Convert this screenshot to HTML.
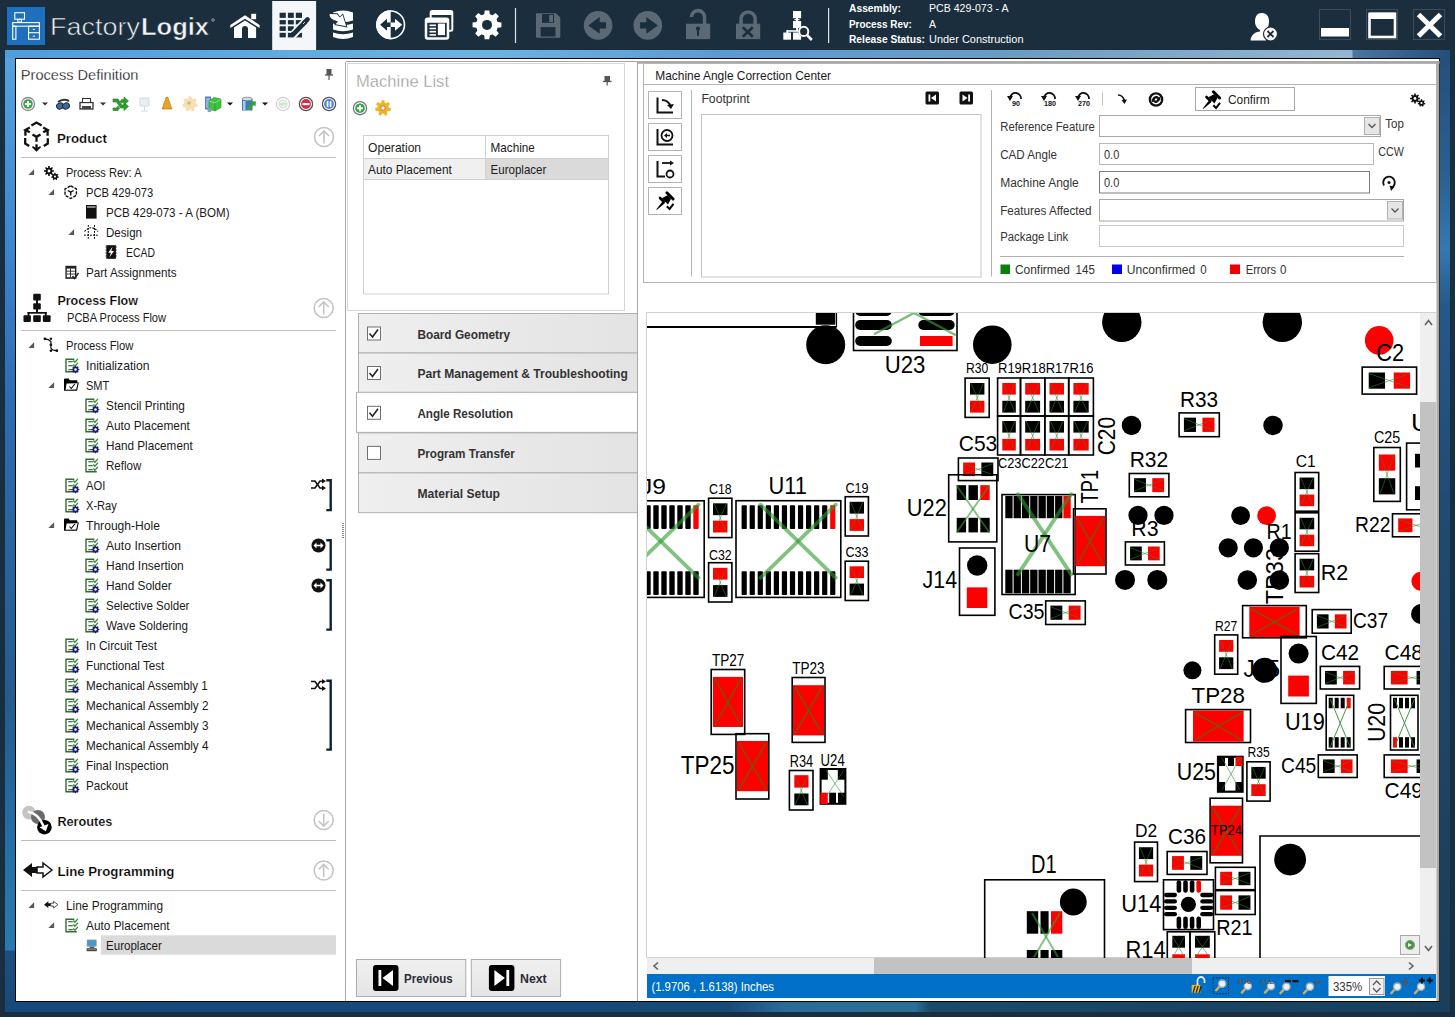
<!DOCTYPE html>
<html><head><meta charset="utf-8"><title>FactoryLogix</title>
<style>html,body{margin:0;padding:0;width:1455px;height:1017px;overflow:hidden;background:#1b2e3d}
svg{display:block;font-family:"Liberation Sans",sans-serif}</style></head>
<body><svg width="1455" height="1017" viewBox="0 0 1455 1017">
<defs>
<linearGradient id="gTop" x1="0" x2="1" y1="0" y2="0">
 <stop offset="0" stop-color="#4f9ddd"/><stop offset="0.33" stop-color="#6cb4e0"/>
 <stop offset="0.5" stop-color="#5b9bd4"/><stop offset="0.7" stop-color="#6b9cc2"/>
 <stop offset="0.932" stop-color="#93b7d2"/><stop offset="0.933" stop-color="#4a77a0"/>
 <stop offset="1" stop-color="#234e7b"/></linearGradient>
<linearGradient id="gLeft" x1="0" x2="0" y1="0" y2="1">
 <stop offset="0" stop-color="#56a2e0"/><stop offset="0.2" stop-color="#3c86cc"/>
 <stop offset="0.358" stop-color="#2c6cb2"/><stop offset="0.673" stop-color="#235c8e"/>
 <stop offset="0.83" stop-color="#2370a8"/><stop offset="0.935" stop-color="#2a7ab2"/><stop offset="0.936" stop-color="#1a4f80"/>
 <stop offset="1" stop-color="#174a7a"/></linearGradient>
<linearGradient id="gRight" x1="0" x2="0" y1="0" y2="1">
 <stop offset="0" stop-color="#24507d"/><stop offset="0.12" stop-color="#2a5f90"/><stop offset="0.2" stop-color="#3579b0"/>
 <stop offset="0.26" stop-color="#25588a"/><stop offset="0.5" stop-color="#1f4a70"/><stop offset="1" stop-color="#1a3d58"/></linearGradient>
<linearGradient id="gBot" x1="0" x2="1" y1="0" y2="0">
 <stop offset="0" stop-color="#174a7a"/><stop offset="0.5" stop-color="#184a78"/>
 <stop offset="0.54" stop-color="#2a6c97"/><stop offset="0.63" stop-color="#2a6f96"/><stop offset="0.64" stop-color="#1a4a6a"/>
 <stop offset="1" stop-color="#17405e"/></linearGradient>
<linearGradient id="gAcc" x1="0" x2="1" y1="0" y2="0">
 <stop offset="0" stop-color="#efefef"/><stop offset="1" stop-color="#e3e3e3"/></linearGradient>
<linearGradient id="gBtn" x1="0" x2="0" y1="0" y2="1">
 <stop offset="0" stop-color="#f0f0f0"/><stop offset="1" stop-color="#e5e5e5"/></linearGradient>
</defs>
<rect x="0" y="0" width="1455" height="1017" fill="#1b2e3d"/>
<rect x="5" y="50" width="1445" height="8" fill="url(#gTop)"/>
<rect x="5" y="58" width="10" height="954" fill="url(#gLeft)"/>
<rect x="1440" y="58" width="10" height="954" fill="url(#gRight)"/>
<rect x="5" y="1002" width="1445" height="10" fill="url(#gBot)"/>
<rect x="15" y="58" width="1425" height="944" fill="#000"/>
<rect x="16" y="59" width="1423" height="942" fill="#fff"/>
<rect x="7" y="7" width="38" height="38" fill="#1f6fbf"/>
<rect x="14.8" y="12.7" width="9.7" height="6.5" fill="none" stroke="#ffffff" stroke-width="1.1"/>
<rect x="17.9" y="19.4" width="3.6" height="2.6" fill="none" stroke="#ffffff" stroke-width="1"/>
<rect x="12.7" y="22.6" width="26.7" height="3.6" fill="none" stroke="#ffffff" stroke-width="1.1"/>
<rect x="12.7" y="26.2" width="3.2" height="13" fill="none" stroke="#ffffff" stroke-width="1.1"/>
<rect x="28.6" y="26.2" width="10.8" height="13" fill="none" stroke="#ffffff" stroke-width="1.1"/>
<line x1="28.6" y1="32.7" x2="39.4" y2="32.7" stroke="#ffffff" stroke-width="1.1"/>
<line x1="32.8" y1="29.4" x2="35" y2="29.4" stroke="#ffffff" stroke-width="1"/>
<line x1="32.8" y1="36.2" x2="35" y2="36.2" stroke="#ffffff" stroke-width="1"/>
<text x="50" y="35" font-size="23.5" fill="#f2f4f6" textLength="90" lengthAdjust="spacingAndGlyphs" stroke="#1b2e3d" stroke-width="0.6" paint-order="fill">Factory</text>
<text x="141" y="35" font-size="23.5" font-weight="bold" fill="#f2f4f6" textLength="68" lengthAdjust="spacingAndGlyphs" stroke="#1b2e3d" stroke-width="0.5" paint-order="fill">Logix</text>
<circle cx="213" cy="20" r="1.3" fill="none" stroke="#cfd6dc" stroke-width="0.6"/>
<path d="M230.3,25 L245,15.2 L259.6,25 L259.6,28 L245,18.8 L230.3,28 Z" fill="#ffffff"/>
<rect x="251.2" y="13.8" width="4.9" height="5.4" fill="#ffffff"/>
<path d="M234,27.5 L245,20.5 L256.1,27.5 L256.1,37.9 L248,37.9 L248,29 A3,3 0 0 0 242,29 L242,37.9 L234,37.9 Z" fill="#ffffff"/>
<rect x="272.2" y="1" width="43.9" height="49" fill="#f5f6fa"/>
<rect x="279.6" y="12.7" width="6.199999999999989" height="5.199999999999999" fill="#1b2e3d"/>
<rect x="287.9" y="12.7" width="5.900000000000034" height="5.199999999999999" fill="#1b2e3d"/>
<rect x="295.8" y="12.7" width="6.199999999999989" height="5.199999999999999" fill="#1b2e3d"/>
<rect x="279.6" y="20.1" width="6.199999999999989" height="4.299999999999997" fill="#1b2e3d"/>
<rect x="287.9" y="20.1" width="5.900000000000034" height="4.299999999999997" fill="#1b2e3d"/>
<rect x="295.8" y="20.1" width="6.199999999999989" height="4.299999999999997" fill="#1b2e3d"/>
<rect x="279.6" y="26.3" width="6.199999999999989" height="4.599999999999998" fill="#1b2e3d"/>
<rect x="287.9" y="26.3" width="5.900000000000034" height="4.599999999999998" fill="#1b2e3d"/>
<rect x="295.8" y="26.3" width="6.199999999999989" height="4.599999999999998" fill="#1b2e3d"/>
<rect x="279.6" y="32.8" width="6.199999999999989" height="4.600000000000001" fill="#1b2e3d"/>
<rect x="287.9" y="32.8" width="5.900000000000034" height="4.600000000000001" fill="#1b2e3d"/>
<rect x="295.8" y="32.8" width="6.199999999999989" height="4.600000000000001" fill="#1b2e3d"/>
<line x1="293" y1="35" x2="306" y2="21" stroke="#f5f6fa" stroke-width="8"/>
<line x1="292.5" y1="35.2" x2="305.8" y2="21.3" stroke="#1b2e3d" stroke-width="4.6"/>
<path d="M290.3,36.5 L291.5,31.8 L295.3,35.3 Z" fill="#1b2e3d"/>
<line x1="304" y1="23" x2="307.5" y2="19.4" stroke="#1b2e3d" stroke-width="4.6" stroke-linecap="round"/>
<line x1="303" y1="24" x2="305" y2="22" stroke="#f5f6fa" stroke-width="0.8"/>
<g fill="#fff">
<path d="M333,12.5 Q343,8.5 353,12.5 L353,20.5 Q343,24 333,20.5 Z" fill="#ffffff"/>
<path d="M333,23.5 Q343,27 353,23.5 L353,29.5 Q343,33 333,29.5 Z" fill="#ffffff"/>
<path d="M333,32.5 Q343,36 353,32.5 L353,37 Q343,41 333,37 Z" fill="#ffffff"/>
</g>
<path d="M328.5,13 L337.5,13.2 L340,16.5 L343,13.5 L347.5,27.5 L334,25 L337,22 L332,20 Z" fill="#1b2e3d"/>
<path d="M329.5,14 L337,14.2 L339.8,17.6 L342.6,15 L346.2,26.3 L335.5,24.2 L338,21.6 L333,19.5 Q330,18.5 329.5,14 Z" fill="#fff"/>
<circle cx="390.7" cy="24.8" r="13.8" fill="none" stroke="#fff" stroke-width="1.6"/>
<path d="M390.7,10.3 A14.5,14.5 0 0 0 390.7,39.3 Z" fill="#fff"/>
<path d="M380.1,24.8 L387,18.8 L387,22.6 L390.7,22.6 L390.7,27 L387,27 L387,30.8 Z" fill="#1b2e3d"/>
<path d="M402.2,24.8 L395,18.8 L395,22.6 L390.7,22.6 L390.7,27 L395,27 L395,30.8 Z" fill="#fff"/>
<rect x="430.7" y="11.1" width="21.6" height="19.7" fill="none" stroke="#ffffff" stroke-width="2" rx="1.5"/>
<rect x="431" y="11" width="21" height="4" fill="#ffffff"/>
<rect x="426" y="18.8" width="22" height="19.7" fill="#1b2e3d" stroke="#ffffff" stroke-width="2.5" rx="1.5"/>
<rect x="426" y="18.8" width="22" height="4" fill="#ffffff"/>
<rect x="429.5" y="24.5" width="6.5" height="1.6" fill="#ffffff"/>
<rect x="429.5" y="27.7" width="6.5" height="1.6" fill="#ffffff"/>
<rect x="429.5" y="30.9" width="6.5" height="1.6" fill="#ffffff"/>
<rect x="429.5" y="34.1" width="6.5" height="1.6" fill="#ffffff"/>
<rect x="437.9" y="23.6" width="7.1" height="11.5" fill="#ffffff"/>
<path d="M484.20,14.47 L484.71,10.48 L489.29,10.48 L489.80,14.47 L492.39,15.54 L495.58,13.08 L498.82,16.32 L496.36,19.51 L497.43,22.10 L501.42,22.61 L501.42,27.19 L497.43,27.70 L496.36,30.29 L498.82,33.48 L495.58,36.72 L492.39,34.26 L489.80,35.33 L489.29,39.32 L484.71,39.32 L484.20,35.33 L481.61,34.26 L478.42,36.72 L475.18,33.48 L477.64,30.29 L476.57,27.70 L472.58,27.19 L472.58,22.61 L476.57,22.10 L477.64,19.51 L475.18,16.32 L478.42,13.08 L481.61,15.54 Z" fill="#ffffff"/>
<circle cx="487" cy="24.9" r="10.8" fill="#ffffff"/>
<circle cx="487" cy="24.9" r="5" fill="#1b2e3d"/>
<line x1="515.5" y1="8" x2="515.5" y2="43" stroke="#e0e4e8" stroke-width="1.2"/>
<path d="M536,14.2 Q536,13.2 537,13.2 L556,13.2 L560.3,17.5 L560.3,36.7 Q560.3,37.7 559.3,37.7 L537,37.7 Q536,37.7 536,36.7 Z" fill="#5b6975"/>
<rect x="542" y="14.1" width="12" height="8.7" fill="#1b2e3d"/>
<rect x="549.2" y="15" width="3.8" height="7" fill="#5b6975"/>
<rect x="540.6" y="27.1" width="14.9" height="9.4" fill="#1b2e3d"/>
<circle cx="598.1" cy="25.4" r="14.3" fill="#5b6975"/>
<path d="M588.2,25.4 L599.7,17 L599.7,22.3 L606,22.3 L606,28.6 L599.7,28.6 L599.7,33.8 Z" fill="#1b2e3d"/>
<circle cx="647.8" cy="25.4" r="14.3" fill="#5b6975"/>
<path d="M657.9,25.4 L646.3,17 L646.3,22.3 L640.1,22.3 L640.1,28.6 L646.3,28.6 L646.3,33.8 Z" fill="#1b2e3d"/>
<rect x="686" y="23.7" width="24.2" height="15.4" fill="#5b6975"/>
<path d="M689.8,17 L689.8,16 A8.2,8.2 0 0 1 706.3,18 L706.3,24 L702.8,24 L702.8,18 A4.7,4.7 0 0 0 693.3,16.5 L693.3,17 Z" fill="#5b6975"/>
<circle cx="698" cy="28.7" r="2.1" fill="#1b2e3d"/>
<rect x="697" y="29" width="2" height="6.8" fill="#1b2e3d"/>
<rect x="736" y="23.7" width="24.2" height="15.4" fill="#5b6975"/>
<path d="M739.3,24 L739.3,19 A8.8,8.8 0 0 1 756.9,19 L756.9,24 L753.4,24 L753.4,19 A5.3,5.3 0 0 0 742.8,19 L742.8,24 Z" fill="#5b6975"/>
<line x1="742.8" y1="27.2" x2="752.8" y2="36.8" stroke="#1b2e3d" stroke-width="2.6"/>
<line x1="752.8" y1="27.2" x2="742.8" y2="36.8" stroke="#1b2e3d" stroke-width="2.6"/>
<rect x="793" y="11" width="8.1" height="7.2" fill="#ffffff"/>
<rect x="793" y="21" width="8.1" height="7.1" fill="#ffffff"/>
<rect x="796" y="18" width="2" height="3" fill="#ffffff"/>
<rect x="794.5" y="19" width="5" height="1.2" fill="#ffffff"/>
<rect x="796" y="28" width="2" height="3" fill="#ffffff"/>
<rect x="786.5" y="30.2" width="12" height="1.6" fill="#ffffff"/>
<rect x="786.5" y="30.2" width="1.6" height="3" fill="#ffffff"/>
<rect x="783.3" y="32.5" width="7.7" height="7.2" fill="#ffffff"/>
<rect x="793" y="32.5" width="8.1" height="7.2" fill="#ffffff"/>
<circle cx="803.7" cy="31.4" r="5.6" fill="#1b2e3d"/>
<circle cx="803.7" cy="31.4" r="4.6" fill="none" stroke="#fff" stroke-width="2"/>
<line x1="807" y1="35" x2="811.8" y2="40" stroke="#ffffff" stroke-width="2.6"/>
<line x1="828.6" y1="8" x2="828.6" y2="43" stroke="#e0e4e8" stroke-width="1.2"/>
<text x="849" y="12" font-size="11.3" font-weight="bold" fill="#ffffff" textLength="52" lengthAdjust="spacingAndGlyphs">Assembly:</text>
<text x="849" y="28" font-size="11.3" font-weight="bold" fill="#ffffff" textLength="62.8" lengthAdjust="spacingAndGlyphs">Process Rev:</text>
<text x="849" y="43" font-size="11.3" font-weight="bold" fill="#ffffff" textLength="76" lengthAdjust="spacingAndGlyphs">Release Status:</text>
<text x="929" y="12" font-size="11.3" fill="#ffffff" textLength="79.5" lengthAdjust="spacingAndGlyphs">PCB 429-073 - A</text>
<text x="929" y="28" font-size="11.3" fill="#ffffff" textLength="7" lengthAdjust="spacingAndGlyphs">A</text>
<text x="929" y="43" font-size="11.3" fill="#ffffff" textLength="94.5" lengthAdjust="spacingAndGlyphs">Under Construction</text>
<path d="M1262,13 C1256,13 1255,18 1255,22 C1255,26 1258,29 1260,30 L1260,31.5 C1255,32 1251,35 1250.5,40.5 L1266,40.5 L1266,30 C1268,28 1269,25 1269,21 C1269,17 1267,13 1262,13 Z" fill="#ffffff"/>
<circle cx="1270.5" cy="34" r="7" fill="#ffffff" stroke="#1b2e3d" stroke-width="1.2"/>
<line x1="1267.5" y1="31" x2="1273.5" y2="37" stroke="#1b2e3d" stroke-width="1.8"/>
<line x1="1273.5" y1="31" x2="1267.5" y2="37" stroke="#1b2e3d" stroke-width="1.8"/>
<rect x="1319.5" y="9.5" width="31" height="30" fill="none" stroke="#3d4c57" stroke-width="1"/>
<rect x="1366.5" y="9.5" width="31" height="30" fill="none" stroke="#3d4c57" stroke-width="1"/>
<rect x="1413.5" y="9.5" width="31" height="30" fill="none" stroke="#3d4c57" stroke-width="1"/>
<rect x="1321" y="28" width="28" height="8.5" fill="#ffffff"/>
<rect x="1369.5" y="14" width="25.5" height="23" fill="none" stroke="#ffffff" stroke-width="2.6"/>
<rect x="1369" y="12.5" width="27" height="6.5" fill="#ffffff"/>
<line x1="1418.5" y1="14.5" x2="1440.5" y2="36" stroke="#ffffff" stroke-width="5"/>
<line x1="1440.5" y1="14.5" x2="1418.5" y2="36" stroke="#ffffff" stroke-width="5"/>
<text x="20.8" y="80" font-size="15.3" fill="#000" textLength="117.6" lengthAdjust="spacingAndGlyphs" stroke="#fff" stroke-width="0.3" paint-order="fill">Process Definition</text>
<rect x="326.5" y="69" width="5" height="6" fill="#555"/>
<line x1="325" y1="75" x2="333" y2="75" stroke="#555" stroke-width="1.3"/>
<line x1="329" y1="75" x2="329" y2="80" stroke="#555" stroke-width="1.2"/>
<circle cx="28" cy="104" r="6.5" fill="#fff" stroke="#888" stroke-width="1.3"/>
<circle cx="28" cy="104" r="4.8" fill="#3aa64a"/>
<rect x="25" y="103" width="6" height="2" fill="#fff"/>
<rect x="27" y="101" width="2" height="6" fill="#fff"/>
<path d="M42,102.5 L48,102.5 L45,105.5 Z" fill="#333"/>
<g fill="#3b6ea0" stroke="#222" stroke-width="1">
<ellipse cx="60" cy="106" rx="3.5" ry="3" transform="rotate(-30 60 106)"/>
<ellipse cx="66" cy="106" rx="3.5" ry="3" transform="rotate(-30 66 106)"/>
</g>
<path d="M58,102 Q63,98 69,101" fill="none" stroke="#333" stroke-width="2"/>
<rect x="80" y="102.5" width="13" height="6.5" fill="#fff" stroke="#333" stroke-width="1.3"/>
<rect x="82.5" y="98.5" width="8" height="4" fill="#fff" stroke="#333" stroke-width="1"/>
<rect x="82" y="106" width="9" height="3" fill="#444"/>
<path d="M100,102.5 L106,102.5 L103,105.5 Z" fill="#333"/>
<path d="M113,99 L118,99 L122,105 L124,105 L124,102.5 L128.5,106.5 L124,110.5 L124,108 L120.5,108 L116.5,102 L113,102 Z" fill="#2aa02a" stroke="#207a20" stroke-width="0.6"/>
<path d="M113,108 L116.5,108 L118,106 L119.5,108.5 L118,110.5 L113,110.5 Z M120,102 L121.5,99.5 L124,99.5 L124,97 L128.5,101 L124,105 L124,102.5 L122,102.5 Z" fill="#2aa02a" stroke="#207a20" stroke-width="0.6"/>
<rect x="140" y="98" width="9" height="8" fill="#e8eef4" stroke="#c9d4de" stroke-width="0.8"/>
<line x1="144.5" y1="106" x2="144.5" y2="111" stroke="#c9d4de" stroke-width="0.8"/>
<line x1="141" y1="111" x2="148" y2="111" stroke="#c9d4de" stroke-width="0.8"/>
<path d="M167,97 C165.5,97 165.5,99 165.5,100 C163.5,102 164,106 162,109 L172,109 C170,106 170.5,102 168.5,100 C168.5,99 168.5,97 167,97 Z" fill="#f0a020" stroke="#a86a10" stroke-width="0.6"/>
<path d="M188.29,98.46 L188.60,96.33 L191.40,96.33 L191.71,98.46 L193.26,99.21 L195.13,98.12 L196.87,100.31 L195.40,101.89 L195.78,103.56 L197.79,104.35 L197.17,107.07 L195.02,106.90 L193.95,108.25 L194.59,110.31 L192.07,111.52 L190.86,109.74 L189.14,109.74 L187.93,111.52 L185.41,110.31 L186.05,108.25 L184.98,106.90 L182.83,107.07 L182.21,104.35 L184.22,103.56 L184.60,101.89 L183.13,100.31 L184.87,98.12 L186.74,99.21 Z" fill="#f7e0b0"/>
<circle cx="190" cy="104" r="5.8" fill="#f7e0b0"/>
<circle cx="190" cy="104" r="2.2" fill="#f7e0b0"/>
<circle cx="189" cy="103" r="1.8" fill="#c8b8a0"/>
<rect x="205" y="96.5" width="6" height="13" fill="#5a7fc0"/>
<rect x="206" y="98" width="4" height="10" fill="#8fb0e0"/>
<path d="M209,101 L214,97.5 L221,99 L221,107.5 L215,111 L209,109 Z" fill="#3cc43c" stroke="#2a8a2a" stroke-width="0.6"/>
<path d="M209,101 L215,103 L221,99" fill="none" stroke="#9fe89f" stroke-width="0.8"/>
<line x1="215" y1="103" x2="215" y2="111" stroke="#2a8a2a" stroke-width="0.6"/>
<circle cx="209.5" cy="110" r="2.2" fill="#8aa0b8"/>
<path d="M227,102.5 L233,102.5 L230,105.5 Z" fill="#111"/>
<rect x="242" y="99" width="10.5" height="11.5" fill="#3d78b8"/>
<ellipse cx="247.25" cy="99" rx="5.25" ry="1.8" fill="#cfd8e0" stroke="#666" stroke-width="0.6"/>
<rect x="243" y="101" width="2.5" height="9" fill="#a8c8ec"/>
<path d="M247,108 L252,103 L251,101 L256,101.5 L255.5,106.5 L254,105 L249,110 Z" fill="#2faa2f"/>
<path d="M262,102.5 L268,102.5 L265,105.5 Z" fill="#111"/>
<circle cx="283" cy="104" r="6.6" fill="#fff" stroke="#d0d0d0" stroke-width="1.2"/>
<circle cx="283" cy="104" r="4.6" fill="#cfe8cf"/>
<path d="M280.5,103 A3,3 0 0 1 285.5,102.5 M285.5,105 A3,3 0 0 1 280.5,105.5" fill="none" stroke="#fff" stroke-width="1.1"/>
<circle cx="306" cy="104" r="6.6" fill="#fff" stroke="#555" stroke-width="1.3"/>
<circle cx="306" cy="104" r="4.9" fill="#d82a40"/>
<rect x="302.5" y="103" width="7" height="2.2" fill="#fff"/>
<circle cx="329" cy="104" r="6.6" fill="#fff" stroke="#555" stroke-width="1.3"/>
<circle cx="329" cy="104" r="4.9" fill="#4f86db"/>
<rect x="326.7" y="101.2" width="1.7" height="5.6" fill="#fff"/>
<rect x="329.7" y="101.2" width="1.7" height="5.6" fill="#fff"/>
<g transform="translate(18,116)" fill="none" stroke="#111" stroke-width="2.3" stroke-linejoin="miter">
<path d="M13.4,9.4 L18.5,6.6 L23.6,9.4" fill="none" stroke="#111" stroke-width="2.3"/>
<path d="M11.8,11.5 L7.4,13.9 L11.8,16.3 M7.4,13.9 L7.4,19.8" fill="none" stroke="#111" stroke-width="2.3"/>
<path d="M25.2,11.5 L29.6,13.9 L25.2,16.3 M29.6,13.9 L29.6,19.8" fill="none" stroke="#111" stroke-width="2.3"/>
<path d="M14.5,18.5 L18.5,20.8 L22.5,18.5 M18.5,20.8 L18.5,25.8" fill="none" stroke="#111" stroke-width="2.3"/>
<path d="M7.2,22 L7.2,27.6 L11.2,30" fill="none" stroke="#111" stroke-width="2.3"/>
<path d="M29.8,22.3 L29.8,27.6 L25.8,30" fill="none" stroke="#111" stroke-width="2.3"/>
<path d="M18.5,28.3 L18.5,33" fill="none" stroke="#111" stroke-width="2.3"/>
<path d="M14.5,30.8 L18.5,34.8 L22.5,30.8 L18.5,33 Z" fill="#111" stroke="#111" stroke-width="1.5"/>
</g>
<text x="57" y="142.7" font-size="13.2" font-weight="bold" fill="#000" textLength="50" lengthAdjust="spacingAndGlyphs" stroke="#fff" stroke-width="0.2" paint-order="fill">Product</text>
<circle cx="324" cy="137" r="9.5" fill="none" stroke="#c4c4c4" stroke-width="1.6"/>
<path d="M319,136 L324,131 L329,136" fill="none" stroke="#c4c4c4" stroke-width="1.6"/>
<line x1="324" y1="131" x2="324" y2="143.5" stroke="#c4c4c4" stroke-width="1.6"/>
<line x1="21" y1="157.5" x2="336" y2="157.5" stroke="#bdbdbd" stroke-width="1"/>
<path d="M34.1,169.2 L34.1,175.0 L28.3,175.0 Z" fill="#595959"/>
<path d="M48.14,167.81 L48.22,166.06 L49.78,166.06 L49.86,167.81 L50.65,168.14 L51.94,166.95 L53.05,168.06 L51.86,169.35 L52.19,170.14 L53.94,170.22 L53.94,171.78 L52.19,171.86 L51.86,172.65 L53.05,173.94 L51.94,175.05 L50.65,173.86 L49.86,174.19 L49.78,175.94 L48.22,175.94 L48.14,174.19 L47.35,173.86 L46.06,175.05 L44.95,173.94 L46.14,172.65 L45.81,171.86 L44.06,171.78 L44.06,170.22 L45.81,170.14 L46.14,169.35 L44.95,168.06 L46.06,166.95 L47.35,168.14 Z" fill="#111"/>
<circle cx="49" cy="171" r="3.3" fill="#111"/>
<circle cx="49" cy="171" r="1.4" fill="#fff"/>
<path d="M54.26,174.11 L54.32,172.76 L55.68,172.76 L55.74,174.11 L56.41,174.43 L57.50,173.64 L58.35,174.70 L57.33,175.59 L57.49,176.31 L58.80,176.67 L58.49,178.00 L57.16,177.75 L56.70,178.33 L57.24,179.57 L56.01,180.16 L55.37,178.97 L54.63,178.97 L53.99,180.16 L52.76,179.57 L53.30,178.33 L52.84,177.75 L51.51,178.00 L51.20,176.67 L52.51,176.31 L52.67,175.59 L51.65,174.70 L52.50,173.64 L53.59,174.43 Z" fill="#111"/>
<circle cx="55" cy="176.5" r="2.5" fill="#111"/>
<circle cx="55" cy="176.5" r="1.1" fill="#fff"/>
<text x="66" y="177" font-size="12.2" fill="#1a1a1a" textLength="75.5" lengthAdjust="spacingAndGlyphs">Process Rev: A</text>
<path d="M54.1,189.2 L54.1,195.0 L48.3,195.0 Z" fill="#595959"/>
<path d="M70.7,185.8 L76.4,189 L76.4,195.3 L70.7,198.5 L65,195.3 L65,189 Z" fill="none" stroke="#111" stroke-width="1.4" stroke-dasharray="3.2,1.2"/>
<path d="M67.8,190.5 L70.7,192.2 L73.6,190.5 M70.7,192.2 L70.7,195.5" fill="none" stroke="#111" stroke-width="1.4"/>
<text x="86" y="197" font-size="12.2" fill="#1a1a1a" textLength="67.2" lengthAdjust="spacingAndGlyphs">PCB 429-073</text>
<rect x="86" y="205" width="10.6" height="13.6" fill="#111"/>
<line x1="87" y1="207" x2="95.6" y2="207" stroke="#fff" stroke-width="1"/>
<text x="106" y="217" font-size="12.2" fill="#1a1a1a" textLength="123.6" lengthAdjust="spacingAndGlyphs">PCB 429-073 - A (BOM)</text>
<path d="M74.1,229.2 L74.1,235.0 L68.3,235.0 Z" fill="#595959"/>
<g stroke="#111" stroke-width="1.2" fill="none" stroke-dasharray="1.8,1.2">
<line x1="88.3" y1="225" x2="88.3" y2="239.5" stroke="#000" stroke-width="1"/>
<line x1="94.5" y1="225" x2="94.5" y2="239.5" stroke="#000" stroke-width="1"/>
<line x1="84" y1="235.2" x2="98.5" y2="235.2" stroke="#000" stroke-width="1"/>
<path d="M84.5,231.5 Q91.4,224 98,231.5" fill="none" stroke="#111" stroke-width="1.2"/>
</g>
<text x="106" y="237" font-size="12.2" fill="#1a1a1a" textLength="36" lengthAdjust="spacingAndGlyphs">Design</text>
<rect x="106.3" y="245.2" width="9.6" height="13.6" fill="#111"/>
<path d="M105.5,247 L106.3,247 M105.5,250 L106.3,250 M105.5,253 L106.3,253 M105.5,256 L106.3,256 M115.9,247 L116.7,247 M115.9,250 L116.7,250 M115.9,253 L116.7,253 M115.9,256 L116.7,256" fill="none" stroke="#111" stroke-width="1.2"/>
<path d="M112.5,246.8 L108.3,252.8 L111,252.8 L109.3,257.5 L114,251 L111.3,251 Z" fill="#fff"/>
<text x="126" y="257" font-size="12.2" fill="#1a1a1a" textLength="28.9" lengthAdjust="spacingAndGlyphs">ECAD</text>
<rect x="65.4" y="265.8" width="11" height="13" fill="#222"/>
<rect x="66.8" y="268.6" width="8.2" height="8.6" fill="#fff"/>
<line x1="66.8" y1="271.2" x2="75" y2="271.2" stroke="#222" stroke-width="0.9"/>
<line x1="66.8" y1="274" x2="75" y2="274" stroke="#222" stroke-width="0.9"/>
<line x1="70.5" y1="268.6" x2="70.5" y2="277.2" stroke="#222" stroke-width="0.9"/>
<path d="M72.5,276 L74.5,278.5 L78.5,273" fill="none" stroke="#222" stroke-width="1.4"/>
<text x="86" y="277" font-size="12.2" fill="#1a1a1a" textLength="90.6" lengthAdjust="spacingAndGlyphs">Part Assignments</text>
<rect x="33.2" y="293.7" width="7.6" height="6.9" fill="#111" rx="1"/>
<rect x="33.2" y="303.2" width="7.6" height="6.4" fill="#111" rx="1"/>
<rect x="36" y="300" width="2" height="4" fill="#111"/>
<rect x="36" y="309" width="2" height="4" fill="#111"/>
<rect x="27.6" y="312" width="19.1" height="1.7" fill="#111"/>
<rect x="27.6" y="312" width="1.8" height="4" fill="#111"/>
<rect x="44.9" y="312" width="1.8" height="4" fill="#111"/>
<rect x="23.5" y="315.3" width="7.399999999999999" height="6.8" fill="#111" rx="1"/>
<rect x="33.2" y="315.3" width="7.599999999999994" height="6.8" fill="#111" rx="1"/>
<rect x="42.9" y="315.3" width="7.700000000000003" height="6.8" fill="#111" rx="1"/>
<text x="57.4" y="305.4" font-size="13.2" font-weight="bold" fill="#000" textLength="80.6" lengthAdjust="spacingAndGlyphs" stroke="#fff" stroke-width="0.2" paint-order="fill">Process Flow</text>
<text x="67" y="322.4" font-size="12.2" fill="#1a1a1a" textLength="99" lengthAdjust="spacingAndGlyphs">PCBA Process Flow</text>
<circle cx="323.7" cy="308" r="9.5" fill="none" stroke="#c4c4c4" stroke-width="1.6"/>
<path d="M318.7,307 L323.7,302 L328.7,307" fill="none" stroke="#c4c4c4" stroke-width="1.6"/>
<line x1="323.7" y1="302" x2="323.7" y2="314.5" stroke="#c4c4c4" stroke-width="1.6"/>
<line x1="21" y1="330.5" x2="336" y2="330.5" stroke="#bdbdbd" stroke-width="1"/>
<path d="M34.1,342.2 L34.1,348.0 L28.3,348.0 Z" fill="#595959"/>
<path d="M44.9,338.8 Q48.5,339 50.9,341.5 L50.9,348 Q52,350.5 56.8,350.7" fill="none" stroke="#111" stroke-width="1.2"/>
<circle cx="44.9" cy="338.8" r="1.4" fill="#111"/>
<circle cx="50.9" cy="338.8" r="1.2" fill="#111"/>
<circle cx="50.9" cy="344.7" r="1.3" fill="#111"/>
<circle cx="50.9" cy="350.7" r="1.3" fill="#111"/>
<circle cx="56.8" cy="350.7" r="1.4" fill="#111"/>
<text x="66" y="350" font-size="12.2" fill="#1a1a1a" textLength="67.4" lengthAdjust="spacingAndGlyphs">Process Flow</text>
<g transform="translate(65.3,358.5)">
<path d="M9,0.7 L0.7,0.7 L0.7,13.3 L11.5,13.3" fill="none" stroke="#356a35" stroke-width="1.4"/>
<line x1="3" y1="3.2" x2="7.5" y2="3.2" stroke="#356a35" stroke-width="1.2"/>
<path d="M8,2.0 L9.6,3.8000000000000003 L12.6,0.40000000000000036" fill="none" stroke="#2d8a2d" stroke-width="1.3"/>
<line x1="3" y1="7.2" x2="7.5" y2="7.2" stroke="#356a35" stroke-width="1.2"/>
<path d="M8,6.0 L9.6,7.8 L12.6,4.4" fill="none" stroke="#2d8a2d" stroke-width="1.3"/>
<line x1="3" y1="11.2" x2="7.5" y2="11.2" stroke="#356a35" stroke-width="1.2"/>
<path d="M8,10.0 L9.6,11.799999999999999 L12.6,8.399999999999999" fill="none" stroke="#2d8a2d" stroke-width="1.3"/>
<path d="M9.47,8.30 L9.59,7.15 L10.81,7.15 L10.93,8.30 L11.60,8.57 L12.49,7.84 L13.36,8.71 L12.63,9.60 L12.90,10.27 L14.05,10.39 L14.05,11.61 L12.90,11.73 L12.63,12.40 L13.36,13.29 L12.49,14.16 L11.60,13.43 L10.93,13.70 L10.81,14.85 L9.59,14.85 L9.47,13.70 L8.80,13.43 L7.91,14.16 L7.04,13.29 L7.77,12.40 L7.50,11.73 L6.35,11.61 L6.35,10.39 L7.50,10.27 L7.77,9.60 L7.04,8.71 L7.91,7.84 L8.80,8.57 Z" fill="#1e1e6e"/>
<circle cx="10.2" cy="11" r="2.8" fill="#1e1e6e"/>
<circle cx="10.2" cy="11" r="1.2" fill="#fff"/>
</g>
<text x="86" y="370" font-size="12.2" fill="#1a1a1a" textLength="63.5" lengthAdjust="spacingAndGlyphs">Initialization</text>
<path d="M54.1,382.2 L54.1,388.0 L48.3,388.0 Z" fill="#595959"/>
<g transform="translate(64,378)">
<path d="M0,12.8 L0,1.5 Q0,0.5 1,0.5 L4.6,0.5 L5.8,2.3 L12.6,2.3 Q13.4,2.3 13.4,3.5 L13.4,4.5 L14.8,4.5 L13.2,12.2 Q13,12.8 12.5,12.8 Z" fill="#000"/>
<path d="M2.6,5.6 L13.6,5.3 L12.2,11.5 L1.6,11.8 Z" fill="#fff"/>
<path d="M5.5,8.5 L7.2,10.5 L10.8,6" fill="none" stroke="#000" stroke-width="1.1"/>
</g>
<text x="86" y="390" font-size="12.2" fill="#1a1a1a" textLength="23.3" lengthAdjust="spacingAndGlyphs">SMT</text>
<g transform="translate(85.3,398.5)">
<path d="M9,0.7 L0.7,0.7 L0.7,13.3 L11.5,13.3" fill="none" stroke="#356a35" stroke-width="1.4"/>
<line x1="3" y1="3.2" x2="7.5" y2="3.2" stroke="#356a35" stroke-width="1.2"/>
<path d="M8,2.0 L9.6,3.8000000000000003 L12.6,0.40000000000000036" fill="none" stroke="#2d8a2d" stroke-width="1.3"/>
<line x1="3" y1="7.2" x2="7.5" y2="7.2" stroke="#356a35" stroke-width="1.2"/>
<path d="M8,6.0 L9.6,7.8 L12.6,4.4" fill="none" stroke="#2d8a2d" stroke-width="1.3"/>
<line x1="3" y1="11.2" x2="7.5" y2="11.2" stroke="#356a35" stroke-width="1.2"/>
<path d="M8,10.0 L9.6,11.799999999999999 L12.6,8.399999999999999" fill="none" stroke="#2d8a2d" stroke-width="1.3"/>
<path d="M9.47,8.30 L9.59,7.15 L10.81,7.15 L10.93,8.30 L11.60,8.57 L12.49,7.84 L13.36,8.71 L12.63,9.60 L12.90,10.27 L14.05,10.39 L14.05,11.61 L12.90,11.73 L12.63,12.40 L13.36,13.29 L12.49,14.16 L11.60,13.43 L10.93,13.70 L10.81,14.85 L9.59,14.85 L9.47,13.70 L8.80,13.43 L7.91,14.16 L7.04,13.29 L7.77,12.40 L7.50,11.73 L6.35,11.61 L6.35,10.39 L7.50,10.27 L7.77,9.60 L7.04,8.71 L7.91,7.84 L8.80,8.57 Z" fill="#1e1e6e"/>
<circle cx="10.2" cy="11" r="2.8" fill="#1e1e6e"/>
<circle cx="10.2" cy="11" r="1.2" fill="#fff"/>
</g>
<text x="106" y="410" font-size="12.2" fill="#1a1a1a" textLength="78.8" lengthAdjust="spacingAndGlyphs">Stencil Printing</text>
<g transform="translate(85.3,418.5)">
<path d="M9,0.7 L0.7,0.7 L0.7,13.3 L11.5,13.3" fill="none" stroke="#356a35" stroke-width="1.4"/>
<line x1="3" y1="3.2" x2="7.5" y2="3.2" stroke="#356a35" stroke-width="1.2"/>
<path d="M8,2.0 L9.6,3.8000000000000003 L12.6,0.40000000000000036" fill="none" stroke="#2d8a2d" stroke-width="1.3"/>
<line x1="3" y1="7.2" x2="7.5" y2="7.2" stroke="#356a35" stroke-width="1.2"/>
<path d="M8,6.0 L9.6,7.8 L12.6,4.4" fill="none" stroke="#2d8a2d" stroke-width="1.3"/>
<line x1="3" y1="11.2" x2="7.5" y2="11.2" stroke="#356a35" stroke-width="1.2"/>
<path d="M8,10.0 L9.6,11.799999999999999 L12.6,8.399999999999999" fill="none" stroke="#2d8a2d" stroke-width="1.3"/>
<path d="M9.47,8.30 L9.59,7.15 L10.81,7.15 L10.93,8.30 L11.60,8.57 L12.49,7.84 L13.36,8.71 L12.63,9.60 L12.90,10.27 L14.05,10.39 L14.05,11.61 L12.90,11.73 L12.63,12.40 L13.36,13.29 L12.49,14.16 L11.60,13.43 L10.93,13.70 L10.81,14.85 L9.59,14.85 L9.47,13.70 L8.80,13.43 L7.91,14.16 L7.04,13.29 L7.77,12.40 L7.50,11.73 L6.35,11.61 L6.35,10.39 L7.50,10.27 L7.77,9.60 L7.04,8.71 L7.91,7.84 L8.80,8.57 Z" fill="#1e1e6e"/>
<circle cx="10.2" cy="11" r="2.8" fill="#1e1e6e"/>
<circle cx="10.2" cy="11" r="1.2" fill="#fff"/>
</g>
<text x="106" y="430" font-size="12.2" fill="#1a1a1a" textLength="83.9" lengthAdjust="spacingAndGlyphs">Auto Placement</text>
<g transform="translate(85.3,438.5)">
<path d="M9,0.7 L0.7,0.7 L0.7,13.3 L11.5,13.3" fill="none" stroke="#356a35" stroke-width="1.4"/>
<line x1="3" y1="3.2" x2="7.5" y2="3.2" stroke="#356a35" stroke-width="1.2"/>
<path d="M8,2.0 L9.6,3.8000000000000003 L12.6,0.40000000000000036" fill="none" stroke="#2d8a2d" stroke-width="1.3"/>
<line x1="3" y1="7.2" x2="7.5" y2="7.2" stroke="#356a35" stroke-width="1.2"/>
<path d="M8,6.0 L9.6,7.8 L12.6,4.4" fill="none" stroke="#2d8a2d" stroke-width="1.3"/>
<line x1="3" y1="11.2" x2="7.5" y2="11.2" stroke="#356a35" stroke-width="1.2"/>
<path d="M8,10.0 L9.6,11.799999999999999 L12.6,8.399999999999999" fill="none" stroke="#2d8a2d" stroke-width="1.3"/>
<path d="M9.47,8.30 L9.59,7.15 L10.81,7.15 L10.93,8.30 L11.60,8.57 L12.49,7.84 L13.36,8.71 L12.63,9.60 L12.90,10.27 L14.05,10.39 L14.05,11.61 L12.90,11.73 L12.63,12.40 L13.36,13.29 L12.49,14.16 L11.60,13.43 L10.93,13.70 L10.81,14.85 L9.59,14.85 L9.47,13.70 L8.80,13.43 L7.91,14.16 L7.04,13.29 L7.77,12.40 L7.50,11.73 L6.35,11.61 L6.35,10.39 L7.50,10.27 L7.77,9.60 L7.04,8.71 L7.91,7.84 L8.80,8.57 Z" fill="#1e1e6e"/>
<circle cx="10.2" cy="11" r="2.8" fill="#1e1e6e"/>
<circle cx="10.2" cy="11" r="1.2" fill="#fff"/>
</g>
<text x="106" y="450" font-size="12.2" fill="#1a1a1a" textLength="86.7" lengthAdjust="spacingAndGlyphs">Hand Placement</text>
<g transform="translate(85.3,458.5)">
<path d="M9,0.7 L0.7,0.7 L0.7,13.3 L11.5,13.3" fill="none" stroke="#356a35" stroke-width="1.4"/>
<line x1="3" y1="3.2" x2="7.5" y2="3.2" stroke="#356a35" stroke-width="1.2"/>
<path d="M8,2.0 L9.6,3.8000000000000003 L12.6,0.40000000000000036" fill="none" stroke="#2d8a2d" stroke-width="1.3"/>
<line x1="3" y1="7.2" x2="7.5" y2="7.2" stroke="#356a35" stroke-width="1.2"/>
<path d="M8,6.0 L9.6,7.8 L12.6,4.4" fill="none" stroke="#2d8a2d" stroke-width="1.3"/>
<line x1="3" y1="11.2" x2="7.5" y2="11.2" stroke="#356a35" stroke-width="1.2"/>
<path d="M8,10.0 L9.6,11.799999999999999 L12.6,8.399999999999999" fill="none" stroke="#2d8a2d" stroke-width="1.3"/>
</g>
<text x="106" y="470" font-size="12.2" fill="#1a1a1a" textLength="35.3" lengthAdjust="spacingAndGlyphs">Reflow</text>
<g transform="translate(65.3,478.5)">
<path d="M9,0.7 L0.7,0.7 L0.7,13.3 L11.5,13.3" fill="none" stroke="#356a35" stroke-width="1.4"/>
<line x1="3" y1="3.2" x2="7.5" y2="3.2" stroke="#356a35" stroke-width="1.2"/>
<path d="M8,2.0 L9.6,3.8000000000000003 L12.6,0.40000000000000036" fill="none" stroke="#2d8a2d" stroke-width="1.3"/>
<line x1="3" y1="7.2" x2="7.5" y2="7.2" stroke="#356a35" stroke-width="1.2"/>
<path d="M8,6.0 L9.6,7.8 L12.6,4.4" fill="none" stroke="#2d8a2d" stroke-width="1.3"/>
<line x1="3" y1="11.2" x2="7.5" y2="11.2" stroke="#356a35" stroke-width="1.2"/>
<path d="M8,10.0 L9.6,11.799999999999999 L12.6,8.399999999999999" fill="none" stroke="#2d8a2d" stroke-width="1.3"/>
<path d="M9.47,8.30 L9.59,7.15 L10.81,7.15 L10.93,8.30 L11.60,8.57 L12.49,7.84 L13.36,8.71 L12.63,9.60 L12.90,10.27 L14.05,10.39 L14.05,11.61 L12.90,11.73 L12.63,12.40 L13.36,13.29 L12.49,14.16 L11.60,13.43 L10.93,13.70 L10.81,14.85 L9.59,14.85 L9.47,13.70 L8.80,13.43 L7.91,14.16 L7.04,13.29 L7.77,12.40 L7.50,11.73 L6.35,11.61 L6.35,10.39 L7.50,10.27 L7.77,9.60 L7.04,8.71 L7.91,7.84 L8.80,8.57 Z" fill="#1e1e6e"/>
<circle cx="10.2" cy="11" r="2.8" fill="#1e1e6e"/>
<circle cx="10.2" cy="11" r="1.2" fill="#fff"/>
</g>
<text x="86" y="490" font-size="12.2" fill="#1a1a1a" textLength="19.3" lengthAdjust="spacingAndGlyphs">AOI</text>
<g transform="translate(65.3,498.5)">
<path d="M9,0.7 L0.7,0.7 L0.7,13.3 L11.5,13.3" fill="none" stroke="#356a35" stroke-width="1.4"/>
<line x1="3" y1="3.2" x2="7.5" y2="3.2" stroke="#356a35" stroke-width="1.2"/>
<path d="M8,2.0 L9.6,3.8000000000000003 L12.6,0.40000000000000036" fill="none" stroke="#2d8a2d" stroke-width="1.3"/>
<line x1="3" y1="7.2" x2="7.5" y2="7.2" stroke="#356a35" stroke-width="1.2"/>
<path d="M8,6.0 L9.6,7.8 L12.6,4.4" fill="none" stroke="#2d8a2d" stroke-width="1.3"/>
<line x1="3" y1="11.2" x2="7.5" y2="11.2" stroke="#356a35" stroke-width="1.2"/>
<path d="M8,10.0 L9.6,11.799999999999999 L12.6,8.399999999999999" fill="none" stroke="#2d8a2d" stroke-width="1.3"/>
<path d="M9.47,8.30 L9.59,7.15 L10.81,7.15 L10.93,8.30 L11.60,8.57 L12.49,7.84 L13.36,8.71 L12.63,9.60 L12.90,10.27 L14.05,10.39 L14.05,11.61 L12.90,11.73 L12.63,12.40 L13.36,13.29 L12.49,14.16 L11.60,13.43 L10.93,13.70 L10.81,14.85 L9.59,14.85 L9.47,13.70 L8.80,13.43 L7.91,14.16 L7.04,13.29 L7.77,12.40 L7.50,11.73 L6.35,11.61 L6.35,10.39 L7.50,10.27 L7.77,9.60 L7.04,8.71 L7.91,7.84 L8.80,8.57 Z" fill="#1e1e6e"/>
<circle cx="10.2" cy="11" r="2.8" fill="#1e1e6e"/>
<circle cx="10.2" cy="11" r="1.2" fill="#fff"/>
</g>
<text x="86" y="510" font-size="12.2" fill="#1a1a1a" textLength="30.8" lengthAdjust="spacingAndGlyphs">X-Ray</text>
<path d="M54.1,522.2 L54.1,528.0 L48.3,528.0 Z" fill="#595959"/>
<g transform="translate(64,518)">
<path d="M0,12.8 L0,1.5 Q0,0.5 1,0.5 L4.6,0.5 L5.8,2.3 L12.6,2.3 Q13.4,2.3 13.4,3.5 L13.4,4.5 L14.8,4.5 L13.2,12.2 Q13,12.8 12.5,12.8 Z" fill="#000"/>
<path d="M2.6,5.6 L13.6,5.3 L12.2,11.5 L1.6,11.8 Z" fill="#fff"/>
<path d="M5.5,8.5 L7.2,10.5 L10.8,6" fill="none" stroke="#000" stroke-width="1.1"/>
</g>
<text x="86" y="530" font-size="12.2" fill="#1a1a1a" textLength="74" lengthAdjust="spacingAndGlyphs">Through-Hole</text>
<g transform="translate(85.3,538.5)">
<path d="M9,0.7 L0.7,0.7 L0.7,13.3 L11.5,13.3" fill="none" stroke="#356a35" stroke-width="1.4"/>
<line x1="3" y1="3.2" x2="7.5" y2="3.2" stroke="#356a35" stroke-width="1.2"/>
<path d="M8,2.0 L9.6,3.8000000000000003 L12.6,0.40000000000000036" fill="none" stroke="#2d8a2d" stroke-width="1.3"/>
<line x1="3" y1="7.2" x2="7.5" y2="7.2" stroke="#356a35" stroke-width="1.2"/>
<path d="M8,6.0 L9.6,7.8 L12.6,4.4" fill="none" stroke="#2d8a2d" stroke-width="1.3"/>
<line x1="3" y1="11.2" x2="7.5" y2="11.2" stroke="#356a35" stroke-width="1.2"/>
<path d="M8,10.0 L9.6,11.799999999999999 L12.6,8.399999999999999" fill="none" stroke="#2d8a2d" stroke-width="1.3"/>
<path d="M9.47,8.30 L9.59,7.15 L10.81,7.15 L10.93,8.30 L11.60,8.57 L12.49,7.84 L13.36,8.71 L12.63,9.60 L12.90,10.27 L14.05,10.39 L14.05,11.61 L12.90,11.73 L12.63,12.40 L13.36,13.29 L12.49,14.16 L11.60,13.43 L10.93,13.70 L10.81,14.85 L9.59,14.85 L9.47,13.70 L8.80,13.43 L7.91,14.16 L7.04,13.29 L7.77,12.40 L7.50,11.73 L6.35,11.61 L6.35,10.39 L7.50,10.27 L7.77,9.60 L7.04,8.71 L7.91,7.84 L8.80,8.57 Z" fill="#1e1e6e"/>
<circle cx="10.2" cy="11" r="2.8" fill="#1e1e6e"/>
<circle cx="10.2" cy="11" r="1.2" fill="#fff"/>
</g>
<text x="106" y="550" font-size="12.2" fill="#1a1a1a" textLength="75" lengthAdjust="spacingAndGlyphs">Auto Insertion</text>
<g transform="translate(85.3,558.5)">
<path d="M9,0.7 L0.7,0.7 L0.7,13.3 L11.5,13.3" fill="none" stroke="#356a35" stroke-width="1.4"/>
<line x1="3" y1="3.2" x2="7.5" y2="3.2" stroke="#356a35" stroke-width="1.2"/>
<path d="M8,2.0 L9.6,3.8000000000000003 L12.6,0.40000000000000036" fill="none" stroke="#2d8a2d" stroke-width="1.3"/>
<line x1="3" y1="7.2" x2="7.5" y2="7.2" stroke="#356a35" stroke-width="1.2"/>
<path d="M8,6.0 L9.6,7.8 L12.6,4.4" fill="none" stroke="#2d8a2d" stroke-width="1.3"/>
<line x1="3" y1="11.2" x2="7.5" y2="11.2" stroke="#356a35" stroke-width="1.2"/>
<path d="M8,10.0 L9.6,11.799999999999999 L12.6,8.399999999999999" fill="none" stroke="#2d8a2d" stroke-width="1.3"/>
<path d="M9.47,8.30 L9.59,7.15 L10.81,7.15 L10.93,8.30 L11.60,8.57 L12.49,7.84 L13.36,8.71 L12.63,9.60 L12.90,10.27 L14.05,10.39 L14.05,11.61 L12.90,11.73 L12.63,12.40 L13.36,13.29 L12.49,14.16 L11.60,13.43 L10.93,13.70 L10.81,14.85 L9.59,14.85 L9.47,13.70 L8.80,13.43 L7.91,14.16 L7.04,13.29 L7.77,12.40 L7.50,11.73 L6.35,11.61 L6.35,10.39 L7.50,10.27 L7.77,9.60 L7.04,8.71 L7.91,7.84 L8.80,8.57 Z" fill="#1e1e6e"/>
<circle cx="10.2" cy="11" r="2.8" fill="#1e1e6e"/>
<circle cx="10.2" cy="11" r="1.2" fill="#fff"/>
</g>
<text x="106" y="570" font-size="12.2" fill="#1a1a1a" textLength="77.7" lengthAdjust="spacingAndGlyphs">Hand Insertion</text>
<g transform="translate(85.3,578.5)">
<path d="M9,0.7 L0.7,0.7 L0.7,13.3 L11.5,13.3" fill="none" stroke="#356a35" stroke-width="1.4"/>
<line x1="3" y1="3.2" x2="7.5" y2="3.2" stroke="#356a35" stroke-width="1.2"/>
<path d="M8,2.0 L9.6,3.8000000000000003 L12.6,0.40000000000000036" fill="none" stroke="#2d8a2d" stroke-width="1.3"/>
<line x1="3" y1="7.2" x2="7.5" y2="7.2" stroke="#356a35" stroke-width="1.2"/>
<path d="M8,6.0 L9.6,7.8 L12.6,4.4" fill="none" stroke="#2d8a2d" stroke-width="1.3"/>
<line x1="3" y1="11.2" x2="7.5" y2="11.2" stroke="#356a35" stroke-width="1.2"/>
<path d="M8,10.0 L9.6,11.799999999999999 L12.6,8.399999999999999" fill="none" stroke="#2d8a2d" stroke-width="1.3"/>
<path d="M9.47,8.30 L9.59,7.15 L10.81,7.15 L10.93,8.30 L11.60,8.57 L12.49,7.84 L13.36,8.71 L12.63,9.60 L12.90,10.27 L14.05,10.39 L14.05,11.61 L12.90,11.73 L12.63,12.40 L13.36,13.29 L12.49,14.16 L11.60,13.43 L10.93,13.70 L10.81,14.85 L9.59,14.85 L9.47,13.70 L8.80,13.43 L7.91,14.16 L7.04,13.29 L7.77,12.40 L7.50,11.73 L6.35,11.61 L6.35,10.39 L7.50,10.27 L7.77,9.60 L7.04,8.71 L7.91,7.84 L8.80,8.57 Z" fill="#1e1e6e"/>
<circle cx="10.2" cy="11" r="2.8" fill="#1e1e6e"/>
<circle cx="10.2" cy="11" r="1.2" fill="#fff"/>
</g>
<text x="106" y="590" font-size="12.2" fill="#1a1a1a" textLength="65.7" lengthAdjust="spacingAndGlyphs">Hand Solder</text>
<g transform="translate(85.3,598.5)">
<path d="M9,0.7 L0.7,0.7 L0.7,13.3 L11.5,13.3" fill="none" stroke="#356a35" stroke-width="1.4"/>
<line x1="3" y1="3.2" x2="7.5" y2="3.2" stroke="#356a35" stroke-width="1.2"/>
<path d="M8,2.0 L9.6,3.8000000000000003 L12.6,0.40000000000000036" fill="none" stroke="#2d8a2d" stroke-width="1.3"/>
<line x1="3" y1="7.2" x2="7.5" y2="7.2" stroke="#356a35" stroke-width="1.2"/>
<path d="M8,6.0 L9.6,7.8 L12.6,4.4" fill="none" stroke="#2d8a2d" stroke-width="1.3"/>
<line x1="3" y1="11.2" x2="7.5" y2="11.2" stroke="#356a35" stroke-width="1.2"/>
<path d="M8,10.0 L9.6,11.799999999999999 L12.6,8.399999999999999" fill="none" stroke="#2d8a2d" stroke-width="1.3"/>
<path d="M9.47,8.30 L9.59,7.15 L10.81,7.15 L10.93,8.30 L11.60,8.57 L12.49,7.84 L13.36,8.71 L12.63,9.60 L12.90,10.27 L14.05,10.39 L14.05,11.61 L12.90,11.73 L12.63,12.40 L13.36,13.29 L12.49,14.16 L11.60,13.43 L10.93,13.70 L10.81,14.85 L9.59,14.85 L9.47,13.70 L8.80,13.43 L7.91,14.16 L7.04,13.29 L7.77,12.40 L7.50,11.73 L6.35,11.61 L6.35,10.39 L7.50,10.27 L7.77,9.60 L7.04,8.71 L7.91,7.84 L8.80,8.57 Z" fill="#1e1e6e"/>
<circle cx="10.2" cy="11" r="2.8" fill="#1e1e6e"/>
<circle cx="10.2" cy="11" r="1.2" fill="#fff"/>
</g>
<text x="106" y="610" font-size="12.2" fill="#1a1a1a" textLength="83.4" lengthAdjust="spacingAndGlyphs">Selective Solder</text>
<g transform="translate(85.3,618.5)">
<path d="M9,0.7 L0.7,0.7 L0.7,13.3 L11.5,13.3" fill="none" stroke="#356a35" stroke-width="1.4"/>
<line x1="3" y1="3.2" x2="7.5" y2="3.2" stroke="#356a35" stroke-width="1.2"/>
<path d="M8,2.0 L9.6,3.8000000000000003 L12.6,0.40000000000000036" fill="none" stroke="#2d8a2d" stroke-width="1.3"/>
<line x1="3" y1="7.2" x2="7.5" y2="7.2" stroke="#356a35" stroke-width="1.2"/>
<path d="M8,6.0 L9.6,7.8 L12.6,4.4" fill="none" stroke="#2d8a2d" stroke-width="1.3"/>
<line x1="3" y1="11.2" x2="7.5" y2="11.2" stroke="#356a35" stroke-width="1.2"/>
<path d="M8,10.0 L9.6,11.799999999999999 L12.6,8.399999999999999" fill="none" stroke="#2d8a2d" stroke-width="1.3"/>
<path d="M9.47,8.30 L9.59,7.15 L10.81,7.15 L10.93,8.30 L11.60,8.57 L12.49,7.84 L13.36,8.71 L12.63,9.60 L12.90,10.27 L14.05,10.39 L14.05,11.61 L12.90,11.73 L12.63,12.40 L13.36,13.29 L12.49,14.16 L11.60,13.43 L10.93,13.70 L10.81,14.85 L9.59,14.85 L9.47,13.70 L8.80,13.43 L7.91,14.16 L7.04,13.29 L7.77,12.40 L7.50,11.73 L6.35,11.61 L6.35,10.39 L7.50,10.27 L7.77,9.60 L7.04,8.71 L7.91,7.84 L8.80,8.57 Z" fill="#1e1e6e"/>
<circle cx="10.2" cy="11" r="2.8" fill="#1e1e6e"/>
<circle cx="10.2" cy="11" r="1.2" fill="#fff"/>
</g>
<text x="106" y="630" font-size="12.2" fill="#1a1a1a" textLength="82.1" lengthAdjust="spacingAndGlyphs">Wave Soldering</text>
<g transform="translate(65.3,638.5)">
<path d="M9,0.7 L0.7,0.7 L0.7,13.3 L11.5,13.3" fill="none" stroke="#356a35" stroke-width="1.4"/>
<line x1="3" y1="3.2" x2="7.5" y2="3.2" stroke="#356a35" stroke-width="1.2"/>
<path d="M8,2.0 L9.6,3.8000000000000003 L12.6,0.40000000000000036" fill="none" stroke="#2d8a2d" stroke-width="1.3"/>
<line x1="3" y1="7.2" x2="7.5" y2="7.2" stroke="#356a35" stroke-width="1.2"/>
<path d="M8,6.0 L9.6,7.8 L12.6,4.4" fill="none" stroke="#2d8a2d" stroke-width="1.3"/>
<line x1="3" y1="11.2" x2="7.5" y2="11.2" stroke="#356a35" stroke-width="1.2"/>
<path d="M8,10.0 L9.6,11.799999999999999 L12.6,8.399999999999999" fill="none" stroke="#2d8a2d" stroke-width="1.3"/>
<path d="M9.47,8.30 L9.59,7.15 L10.81,7.15 L10.93,8.30 L11.60,8.57 L12.49,7.84 L13.36,8.71 L12.63,9.60 L12.90,10.27 L14.05,10.39 L14.05,11.61 L12.90,11.73 L12.63,12.40 L13.36,13.29 L12.49,14.16 L11.60,13.43 L10.93,13.70 L10.81,14.85 L9.59,14.85 L9.47,13.70 L8.80,13.43 L7.91,14.16 L7.04,13.29 L7.77,12.40 L7.50,11.73 L6.35,11.61 L6.35,10.39 L7.50,10.27 L7.77,9.60 L7.04,8.71 L7.91,7.84 L8.80,8.57 Z" fill="#1e1e6e"/>
<circle cx="10.2" cy="11" r="2.8" fill="#1e1e6e"/>
<circle cx="10.2" cy="11" r="1.2" fill="#fff"/>
</g>
<text x="86" y="650" font-size="12.2" fill="#1a1a1a" textLength="70.9" lengthAdjust="spacingAndGlyphs">In Circuit Test</text>
<g transform="translate(65.3,658.5)">
<path d="M9,0.7 L0.7,0.7 L0.7,13.3 L11.5,13.3" fill="none" stroke="#356a35" stroke-width="1.4"/>
<line x1="3" y1="3.2" x2="7.5" y2="3.2" stroke="#356a35" stroke-width="1.2"/>
<path d="M8,2.0 L9.6,3.8000000000000003 L12.6,0.40000000000000036" fill="none" stroke="#2d8a2d" stroke-width="1.3"/>
<line x1="3" y1="7.2" x2="7.5" y2="7.2" stroke="#356a35" stroke-width="1.2"/>
<path d="M8,6.0 L9.6,7.8 L12.6,4.4" fill="none" stroke="#2d8a2d" stroke-width="1.3"/>
<line x1="3" y1="11.2" x2="7.5" y2="11.2" stroke="#356a35" stroke-width="1.2"/>
<path d="M8,10.0 L9.6,11.799999999999999 L12.6,8.399999999999999" fill="none" stroke="#2d8a2d" stroke-width="1.3"/>
<path d="M9.47,8.30 L9.59,7.15 L10.81,7.15 L10.93,8.30 L11.60,8.57 L12.49,7.84 L13.36,8.71 L12.63,9.60 L12.90,10.27 L14.05,10.39 L14.05,11.61 L12.90,11.73 L12.63,12.40 L13.36,13.29 L12.49,14.16 L11.60,13.43 L10.93,13.70 L10.81,14.85 L9.59,14.85 L9.47,13.70 L8.80,13.43 L7.91,14.16 L7.04,13.29 L7.77,12.40 L7.50,11.73 L6.35,11.61 L6.35,10.39 L7.50,10.27 L7.77,9.60 L7.04,8.71 L7.91,7.84 L8.80,8.57 Z" fill="#1e1e6e"/>
<circle cx="10.2" cy="11" r="2.8" fill="#1e1e6e"/>
<circle cx="10.2" cy="11" r="1.2" fill="#fff"/>
</g>
<text x="86" y="670" font-size="12.2" fill="#1a1a1a" textLength="78.3" lengthAdjust="spacingAndGlyphs">Functional Test</text>
<g transform="translate(65.3,678.5)">
<path d="M9,0.7 L0.7,0.7 L0.7,13.3 L11.5,13.3" fill="none" stroke="#356a35" stroke-width="1.4"/>
<line x1="3" y1="3.2" x2="7.5" y2="3.2" stroke="#356a35" stroke-width="1.2"/>
<path d="M8,2.0 L9.6,3.8000000000000003 L12.6,0.40000000000000036" fill="none" stroke="#2d8a2d" stroke-width="1.3"/>
<line x1="3" y1="7.2" x2="7.5" y2="7.2" stroke="#356a35" stroke-width="1.2"/>
<path d="M8,6.0 L9.6,7.8 L12.6,4.4" fill="none" stroke="#2d8a2d" stroke-width="1.3"/>
<line x1="3" y1="11.2" x2="7.5" y2="11.2" stroke="#356a35" stroke-width="1.2"/>
<path d="M8,10.0 L9.6,11.799999999999999 L12.6,8.399999999999999" fill="none" stroke="#2d8a2d" stroke-width="1.3"/>
<path d="M9.47,8.30 L9.59,7.15 L10.81,7.15 L10.93,8.30 L11.60,8.57 L12.49,7.84 L13.36,8.71 L12.63,9.60 L12.90,10.27 L14.05,10.39 L14.05,11.61 L12.90,11.73 L12.63,12.40 L13.36,13.29 L12.49,14.16 L11.60,13.43 L10.93,13.70 L10.81,14.85 L9.59,14.85 L9.47,13.70 L8.80,13.43 L7.91,14.16 L7.04,13.29 L7.77,12.40 L7.50,11.73 L6.35,11.61 L6.35,10.39 L7.50,10.27 L7.77,9.60 L7.04,8.71 L7.91,7.84 L8.80,8.57 Z" fill="#1e1e6e"/>
<circle cx="10.2" cy="11" r="2.8" fill="#1e1e6e"/>
<circle cx="10.2" cy="11" r="1.2" fill="#fff"/>
</g>
<text x="86" y="690" font-size="12.2" fill="#1a1a1a" textLength="121.8" lengthAdjust="spacingAndGlyphs">Mechanical Assembly 1</text>
<g transform="translate(65.3,698.5)">
<path d="M9,0.7 L0.7,0.7 L0.7,13.3 L11.5,13.3" fill="none" stroke="#356a35" stroke-width="1.4"/>
<line x1="3" y1="3.2" x2="7.5" y2="3.2" stroke="#356a35" stroke-width="1.2"/>
<path d="M8,2.0 L9.6,3.8000000000000003 L12.6,0.40000000000000036" fill="none" stroke="#2d8a2d" stroke-width="1.3"/>
<line x1="3" y1="7.2" x2="7.5" y2="7.2" stroke="#356a35" stroke-width="1.2"/>
<path d="M8,6.0 L9.6,7.8 L12.6,4.4" fill="none" stroke="#2d8a2d" stroke-width="1.3"/>
<line x1="3" y1="11.2" x2="7.5" y2="11.2" stroke="#356a35" stroke-width="1.2"/>
<path d="M8,10.0 L9.6,11.799999999999999 L12.6,8.399999999999999" fill="none" stroke="#2d8a2d" stroke-width="1.3"/>
<path d="M9.47,8.30 L9.59,7.15 L10.81,7.15 L10.93,8.30 L11.60,8.57 L12.49,7.84 L13.36,8.71 L12.63,9.60 L12.90,10.27 L14.05,10.39 L14.05,11.61 L12.90,11.73 L12.63,12.40 L13.36,13.29 L12.49,14.16 L11.60,13.43 L10.93,13.70 L10.81,14.85 L9.59,14.85 L9.47,13.70 L8.80,13.43 L7.91,14.16 L7.04,13.29 L7.77,12.40 L7.50,11.73 L6.35,11.61 L6.35,10.39 L7.50,10.27 L7.77,9.60 L7.04,8.71 L7.91,7.84 L8.80,8.57 Z" fill="#1e1e6e"/>
<circle cx="10.2" cy="11" r="2.8" fill="#1e1e6e"/>
<circle cx="10.2" cy="11" r="1.2" fill="#fff"/>
</g>
<text x="86" y="710" font-size="12.2" fill="#1a1a1a" textLength="122.5" lengthAdjust="spacingAndGlyphs">Mechanical Assembly 2</text>
<g transform="translate(65.3,718.5)">
<path d="M9,0.7 L0.7,0.7 L0.7,13.3 L11.5,13.3" fill="none" stroke="#356a35" stroke-width="1.4"/>
<line x1="3" y1="3.2" x2="7.5" y2="3.2" stroke="#356a35" stroke-width="1.2"/>
<path d="M8,2.0 L9.6,3.8000000000000003 L12.6,0.40000000000000036" fill="none" stroke="#2d8a2d" stroke-width="1.3"/>
<line x1="3" y1="7.2" x2="7.5" y2="7.2" stroke="#356a35" stroke-width="1.2"/>
<path d="M8,6.0 L9.6,7.8 L12.6,4.4" fill="none" stroke="#2d8a2d" stroke-width="1.3"/>
<line x1="3" y1="11.2" x2="7.5" y2="11.2" stroke="#356a35" stroke-width="1.2"/>
<path d="M8,10.0 L9.6,11.799999999999999 L12.6,8.399999999999999" fill="none" stroke="#2d8a2d" stroke-width="1.3"/>
<path d="M9.47,8.30 L9.59,7.15 L10.81,7.15 L10.93,8.30 L11.60,8.57 L12.49,7.84 L13.36,8.71 L12.63,9.60 L12.90,10.27 L14.05,10.39 L14.05,11.61 L12.90,11.73 L12.63,12.40 L13.36,13.29 L12.49,14.16 L11.60,13.43 L10.93,13.70 L10.81,14.85 L9.59,14.85 L9.47,13.70 L8.80,13.43 L7.91,14.16 L7.04,13.29 L7.77,12.40 L7.50,11.73 L6.35,11.61 L6.35,10.39 L7.50,10.27 L7.77,9.60 L7.04,8.71 L7.91,7.84 L8.80,8.57 Z" fill="#1e1e6e"/>
<circle cx="10.2" cy="11" r="2.8" fill="#1e1e6e"/>
<circle cx="10.2" cy="11" r="1.2" fill="#fff"/>
</g>
<text x="86" y="730" font-size="12.2" fill="#1a1a1a" textLength="122.5" lengthAdjust="spacingAndGlyphs">Mechanical Assembly 3</text>
<g transform="translate(65.3,738.5)">
<path d="M9,0.7 L0.7,0.7 L0.7,13.3 L11.5,13.3" fill="none" stroke="#356a35" stroke-width="1.4"/>
<line x1="3" y1="3.2" x2="7.5" y2="3.2" stroke="#356a35" stroke-width="1.2"/>
<path d="M8,2.0 L9.6,3.8000000000000003 L12.6,0.40000000000000036" fill="none" stroke="#2d8a2d" stroke-width="1.3"/>
<line x1="3" y1="7.2" x2="7.5" y2="7.2" stroke="#356a35" stroke-width="1.2"/>
<path d="M8,6.0 L9.6,7.8 L12.6,4.4" fill="none" stroke="#2d8a2d" stroke-width="1.3"/>
<line x1="3" y1="11.2" x2="7.5" y2="11.2" stroke="#356a35" stroke-width="1.2"/>
<path d="M8,10.0 L9.6,11.799999999999999 L12.6,8.399999999999999" fill="none" stroke="#2d8a2d" stroke-width="1.3"/>
<path d="M9.47,8.30 L9.59,7.15 L10.81,7.15 L10.93,8.30 L11.60,8.57 L12.49,7.84 L13.36,8.71 L12.63,9.60 L12.90,10.27 L14.05,10.39 L14.05,11.61 L12.90,11.73 L12.63,12.40 L13.36,13.29 L12.49,14.16 L11.60,13.43 L10.93,13.70 L10.81,14.85 L9.59,14.85 L9.47,13.70 L8.80,13.43 L7.91,14.16 L7.04,13.29 L7.77,12.40 L7.50,11.73 L6.35,11.61 L6.35,10.39 L7.50,10.27 L7.77,9.60 L7.04,8.71 L7.91,7.84 L8.80,8.57 Z" fill="#1e1e6e"/>
<circle cx="10.2" cy="11" r="2.8" fill="#1e1e6e"/>
<circle cx="10.2" cy="11" r="1.2" fill="#fff"/>
</g>
<text x="86" y="750" font-size="12.2" fill="#1a1a1a" textLength="122.5" lengthAdjust="spacingAndGlyphs">Mechanical Assembly 4</text>
<g transform="translate(65.3,758.5)">
<path d="M9,0.7 L0.7,0.7 L0.7,13.3 L11.5,13.3" fill="none" stroke="#356a35" stroke-width="1.4"/>
<line x1="3" y1="3.2" x2="7.5" y2="3.2" stroke="#356a35" stroke-width="1.2"/>
<path d="M8,2.0 L9.6,3.8000000000000003 L12.6,0.40000000000000036" fill="none" stroke="#2d8a2d" stroke-width="1.3"/>
<line x1="3" y1="7.2" x2="7.5" y2="7.2" stroke="#356a35" stroke-width="1.2"/>
<path d="M8,6.0 L9.6,7.8 L12.6,4.4" fill="none" stroke="#2d8a2d" stroke-width="1.3"/>
<line x1="3" y1="11.2" x2="7.5" y2="11.2" stroke="#356a35" stroke-width="1.2"/>
<path d="M8,10.0 L9.6,11.799999999999999 L12.6,8.399999999999999" fill="none" stroke="#2d8a2d" stroke-width="1.3"/>
<path d="M9.47,8.30 L9.59,7.15 L10.81,7.15 L10.93,8.30 L11.60,8.57 L12.49,7.84 L13.36,8.71 L12.63,9.60 L12.90,10.27 L14.05,10.39 L14.05,11.61 L12.90,11.73 L12.63,12.40 L13.36,13.29 L12.49,14.16 L11.60,13.43 L10.93,13.70 L10.81,14.85 L9.59,14.85 L9.47,13.70 L8.80,13.43 L7.91,14.16 L7.04,13.29 L7.77,12.40 L7.50,11.73 L6.35,11.61 L6.35,10.39 L7.50,10.27 L7.77,9.60 L7.04,8.71 L7.91,7.84 L8.80,8.57 Z" fill="#1e1e6e"/>
<circle cx="10.2" cy="11" r="2.8" fill="#1e1e6e"/>
<circle cx="10.2" cy="11" r="1.2" fill="#fff"/>
</g>
<text x="86" y="770" font-size="12.2" fill="#1a1a1a" textLength="82.5" lengthAdjust="spacingAndGlyphs">Final Inspection</text>
<g transform="translate(65.3,778.5)">
<path d="M9,0.7 L0.7,0.7 L0.7,13.3 L11.5,13.3" fill="none" stroke="#356a35" stroke-width="1.4"/>
<line x1="3" y1="3.2" x2="7.5" y2="3.2" stroke="#356a35" stroke-width="1.2"/>
<path d="M8,2.0 L9.6,3.8000000000000003 L12.6,0.40000000000000036" fill="none" stroke="#2d8a2d" stroke-width="1.3"/>
<line x1="3" y1="7.2" x2="7.5" y2="7.2" stroke="#356a35" stroke-width="1.2"/>
<path d="M8,6.0 L9.6,7.8 L12.6,4.4" fill="none" stroke="#2d8a2d" stroke-width="1.3"/>
<line x1="3" y1="11.2" x2="7.5" y2="11.2" stroke="#356a35" stroke-width="1.2"/>
<path d="M8,10.0 L9.6,11.799999999999999 L12.6,8.399999999999999" fill="none" stroke="#2d8a2d" stroke-width="1.3"/>
<path d="M9.47,8.30 L9.59,7.15 L10.81,7.15 L10.93,8.30 L11.60,8.57 L12.49,7.84 L13.36,8.71 L12.63,9.60 L12.90,10.27 L14.05,10.39 L14.05,11.61 L12.90,11.73 L12.63,12.40 L13.36,13.29 L12.49,14.16 L11.60,13.43 L10.93,13.70 L10.81,14.85 L9.59,14.85 L9.47,13.70 L8.80,13.43 L7.91,14.16 L7.04,13.29 L7.77,12.40 L7.50,11.73 L6.35,11.61 L6.35,10.39 L7.50,10.27 L7.77,9.60 L7.04,8.71 L7.91,7.84 L8.80,8.57 Z" fill="#1e1e6e"/>
<circle cx="10.2" cy="11" r="2.8" fill="#1e1e6e"/>
<circle cx="10.2" cy="11" r="1.2" fill="#fff"/>
</g>
<text x="86" y="790" font-size="12.2" fill="#1a1a1a" textLength="42" lengthAdjust="spacingAndGlyphs">Packout</text>
<path d="M311,481.0 L315,481.0 L320,488.0 L323,488.0" fill="none" stroke="#111" stroke-width="1.6"/>
<path d="M311,488.0 L315,488.0 L320,481.0 L323,481.0" fill="none" stroke="#111" stroke-width="1.6"/>
<path d="M322,478.5 L326,481.0 L322,483.5 Z" fill="#111"/>
<path d="M322,485.5 L326,488.0 L322,490.5 Z" fill="#111"/>
<path d="M326.3,480.2 L330.7,480.2 L330.7,510.1 L326.3,510.1" fill="none" stroke="#0f2233" stroke-width="2.4"/>
<circle cx="318.5" cy="545.5" r="7" fill="#111"/>
<path d="M313.5,545.5 L316.5,542.5 L316.5,548.5 Z" fill="#fff"/>
<path d="M323.5,545.5 L320.5,542.5 L320.5,548.5 Z" fill="#fff"/>
<rect x="316.0" y="544.7" width="5" height="1.6" fill="#fff"/>
<path d="M326.3,540.2 L330.7,540.2 L330.7,569.6 L326.3,569.6" fill="none" stroke="#0f2233" stroke-width="2.4"/>
<circle cx="318.5" cy="585.5" r="7" fill="#111"/>
<path d="M313.5,585.5 L316.5,582.5 L316.5,588.5 Z" fill="#fff"/>
<path d="M323.5,585.5 L320.5,582.5 L320.5,588.5 Z" fill="#fff"/>
<rect x="316.0" y="584.7" width="5" height="1.6" fill="#fff"/>
<path d="M326.3,580.2 L330.7,580.2 L330.7,629.6 L326.3,629.6" fill="none" stroke="#0f2233" stroke-width="2.4"/>
<path d="M311,681.5 L315,681.5 L320,688.5 L323,688.5" fill="none" stroke="#111" stroke-width="1.6"/>
<path d="M311,688.5 L315,688.5 L320,681.5 L323,681.5" fill="none" stroke="#111" stroke-width="1.6"/>
<path d="M322,679 L326,681.5 L322,684 Z" fill="#111"/>
<path d="M322,686 L326,688.5 L322,691 Z" fill="#111"/>
<path d="M326.3,680.7 L330.7,680.7 L330.7,749.6 L326.3,749.6" fill="none" stroke="#0f2233" stroke-width="2.4"/>
<rect x="342" y="523" width="2" height="1" fill="#888"/>
<rect x="342" y="525" width="2" height="1" fill="#888"/>
<rect x="342" y="527" width="2" height="1" fill="#888"/>
<rect x="342" y="529" width="2" height="1" fill="#888"/>
<rect x="342" y="531" width="2" height="1" fill="#888"/>
<rect x="342" y="533" width="2" height="1" fill="#888"/>
<rect x="342" y="535" width="2" height="1" fill="#888"/>
<rect x="342" y="537" width="2" height="1" fill="#888"/>
<line x1="345.5" y1="62" x2="345.5" y2="1001" stroke="#a8a8a8" stroke-width="1"/>
<g transform="translate(18,800)">
<circle cx="11" cy="12.6" r="6.8" fill="#c4c4c4"/>
<circle cx="20" cy="17" r="7" fill="#6a6a6a"/>
<circle cx="26.4" cy="27.2" r="7.3" fill="#000"/>
<path d="M9.8,11.8 Q20,13 25.5,26" fill="none" stroke="#fff" stroke-width="2.6"/>
<path d="M21.5,27.3 L30.5,24 L27.8,31.2 Z" fill="#fff"/>
</g>
<text x="57.4" y="826" font-size="13.2" font-weight="bold" fill="#000" textLength="55" lengthAdjust="spacingAndGlyphs" stroke="#fff" stroke-width="0.2" paint-order="fill">Reroutes</text>
<circle cx="323.7" cy="820" r="9.5" fill="none" stroke="#c4c4c4" stroke-width="1.6"/>
<path d="M318.7,821 L323.7,826 L328.7,821" fill="none" stroke="#c4c4c4" stroke-width="1.6"/>
<line x1="323.7" y1="826" x2="323.7" y2="813.5" stroke="#c4c4c4" stroke-width="1.6"/>
<line x1="21" y1="840.5" x2="336" y2="840.5" stroke="#bdbdbd" stroke-width="1"/>
<g transform="translate(23,863) scale(1.0)">
<path d="M0,7 L9,0 L9,4 L14,4 L14,10 L9,10 L9,14 Z" fill="#111"/>
<path d="M29,7 L20,0 L20,4 L14,4 L14,10 L20,10 L20,14 Z" fill="#fff" stroke="#111" stroke-width="1.5"/>
</g>
<text x="57.4" y="876" font-size="13.2" font-weight="bold" fill="#000" textLength="117" lengthAdjust="spacingAndGlyphs" stroke="#fff" stroke-width="0.2" paint-order="fill">Line Programming</text>
<circle cx="323.7" cy="870.5" r="9.5" fill="none" stroke="#c4c4c4" stroke-width="1.6"/>
<path d="M318.7,869.5 L323.7,864.5 L328.7,869.5" fill="none" stroke="#c4c4c4" stroke-width="1.6"/>
<line x1="323.7" y1="864.5" x2="323.7" y2="877.0" stroke="#c4c4c4" stroke-width="1.6"/>
<line x1="21" y1="890.5" x2="336" y2="890.5" stroke="#bdbdbd" stroke-width="1"/>
<path d="M34.1,902.2 L34.1,908.0 L28.3,908.0 Z" fill="#595959"/>
<g transform="translate(44,901.3) scale(0.48)">
<path d="M0,7 L9,0 L9,4 L14,4 L14,10 L9,10 L9,14 Z" fill="#111"/>
<path d="M29,7 L20,0 L20,4 L14,4 L14,10 L20,10 L20,14 Z" fill="#fff" stroke="#111" stroke-width="1.5"/>
</g>
<text x="66" y="910" font-size="12.2" fill="#1a1a1a" textLength="97" lengthAdjust="spacingAndGlyphs">Line Programming</text>
<path d="M54.1,922.2 L54.1,928.0 L48.3,928.0 Z" fill="#595959"/>
<g transform="translate(65.3,918.5)">
<path d="M9,0.7 L0.7,0.7 L0.7,13.3 L11.5,13.3" fill="none" stroke="#356a35" stroke-width="1.4"/>
<line x1="3" y1="3.2" x2="7.5" y2="3.2" stroke="#356a35" stroke-width="1.2"/>
<path d="M8,2.0 L9.6,3.8000000000000003 L12.6,0.40000000000000036" fill="none" stroke="#2d8a2d" stroke-width="1.3"/>
<line x1="3" y1="7.2" x2="7.5" y2="7.2" stroke="#356a35" stroke-width="1.2"/>
<path d="M8,6.0 L9.6,7.8 L12.6,4.4" fill="none" stroke="#2d8a2d" stroke-width="1.3"/>
<line x1="3" y1="11.2" x2="7.5" y2="11.2" stroke="#356a35" stroke-width="1.2"/>
<path d="M8,10.0 L9.6,11.799999999999999 L12.6,8.399999999999999" fill="none" stroke="#2d8a2d" stroke-width="1.3"/>
</g>
<text x="86" y="930" font-size="12.2" fill="#1a1a1a" textLength="83.6" lengthAdjust="spacingAndGlyphs">Auto Placement</text>
<rect x="101" y="935.3" width="235" height="19.4" fill="#dadada"/>
<rect x="86.8" y="939.6" width="9.8" height="7" fill="#8a9098"/>
<rect x="87.8" y="940.6" width="7.8" height="5" fill="#3f9ad8"/>
<rect x="89.5" y="946.6" width="4.8" height="1.6" fill="#555"/>
<rect x="86.6" y="948.2" width="10.2" height="3" fill="#444"/>
<rect x="87.5" y="948.8" width="8.4" height="1" fill="#888"/>
<text x="106" y="950" font-size="12.2" fill="#1a1a1a" textLength="55.9" lengthAdjust="spacingAndGlyphs">Europlacer</text>
<line x1="346" y1="61.5" x2="637.5" y2="61.5" stroke="#a8a8a8" stroke-width="1"/>
<rect x="347.5" y="63.5" width="277" height="247" fill="#fff" stroke="#d6d6d6" stroke-width="1"/>
<text x="356" y="86.8" font-size="16.8" fill="#9a9a9a" textLength="93" lengthAdjust="spacingAndGlyphs" stroke="#fff" stroke-width="0.3" paint-order="fill">Machine List</text>
<rect x="604.5" y="76" width="5.5" height="5.5" fill="#555"/>
<line x1="603" y1="81.5" x2="611.5" y2="81.5" stroke="#555" stroke-width="1.3"/>
<line x1="607.2" y1="81.5" x2="607.2" y2="85.5" stroke="#555" stroke-width="1.2"/>
<circle cx="360" cy="108.2" r="6.6" fill="#fff" stroke="#7a7a7a" stroke-width="1.4"/>
<circle cx="360" cy="108.2" r="4.8" fill="#34a347"/>
<rect x="357" y="107.2" width="6" height="2" fill="#fff"/>
<rect x="359" y="105.2" width="2" height="6" fill="#fff"/>
<path d="M381.37,102.75 L381.57,100.13 L384.43,100.13 L384.63,102.75 L386.09,103.45 L388.26,101.97 L390.05,104.21 L388.12,105.99 L388.48,107.58 L390.99,108.36 L390.35,111.15 L387.76,110.75 L386.74,112.03 L387.71,114.47 L385.12,115.71 L383.82,113.44 L382.18,113.44 L380.88,115.71 L378.29,114.47 L379.26,112.03 L378.24,110.75 L375.65,111.15 L375.01,108.36 L377.52,107.58 L377.88,105.99 L375.95,104.21 L377.74,101.97 L379.91,103.45 Z" fill="#f0b428"/>
<circle cx="383" cy="108" r="5.5" fill="#f0b428"/>
<circle cx="383" cy="108" r="2.2" fill="#fff"/>
<circle cx="383" cy="108" r="2.2" fill="#fff" stroke="#a06a10" stroke-width="0.8"/>
<rect x="363.5" y="135.5" width="245" height="158.5" fill="#fff" stroke="#d0d0d0" stroke-width="1"/>
<rect x="364" y="158.5" width="121" height="21" fill="#f0f0f0"/>
<rect x="485.5" y="158.5" width="122.5" height="21" fill="#dadada"/>
<line x1="363.5" y1="158.5" x2="608.5" y2="158.5" stroke="#d0d0d0" stroke-width="1"/>
<line x1="363.5" y1="179.5" x2="608.5" y2="179.5" stroke="#d0d0d0" stroke-width="1"/>
<line x1="485.5" y1="135.5" x2="485.5" y2="179.5" stroke="#d0d0d0" stroke-width="1"/>
<text x="368" y="152" font-size="12.2" fill="#1a1a1a" textLength="53.1" lengthAdjust="spacingAndGlyphs">Operation</text>
<text x="490.6" y="152" font-size="12.2" fill="#1a1a1a" textLength="44.3" lengthAdjust="spacingAndGlyphs">Machine</text>
<text x="368" y="174.3" font-size="12.2" fill="#1a1a1a" textLength="83.9" lengthAdjust="spacingAndGlyphs">Auto Placement</text>
<text x="490.6" y="174.3" font-size="12.2" fill="#1a1a1a" textLength="55.7" lengthAdjust="spacingAndGlyphs">Europlacer</text>
<rect x="358.5" y="313.5" width="279" height="39.5" fill="url(#gAcc)" stroke="#b0b0b0" stroke-width="1"/>
<rect x="367.5" y="327.0" width="13" height="13" fill="#fff" stroke="#6f6f6f" stroke-width="1"/>
<path d="M369.5,333.5 L372.5,337.0 L378,329.5" fill="none" stroke="#222" stroke-width="1.6"/>
<text x="417.4" y="338.7" font-size="13" font-weight="bold" fill="#333" textLength="92.8" lengthAdjust="spacingAndGlyphs">Board Geometry</text>
<rect x="358.5" y="353.0" width="279" height="39.80000000000001" fill="url(#gAcc)" stroke="#b0b0b0" stroke-width="1"/>
<rect x="367.5" y="366.5" width="13" height="13" fill="#fff" stroke="#6f6f6f" stroke-width="1"/>
<path d="M369.5,373.0 L372.5,376.5 L378,369.0" fill="none" stroke="#222" stroke-width="1.6"/>
<text x="417.4" y="378.2" font-size="13" font-weight="bold" fill="#333" textLength="210.4" lengthAdjust="spacingAndGlyphs">Part Management &amp; Troubleshooting</text>
<rect x="356.5" y="392.3" width="281" height="40.099999999999966" fill="#ffffff" stroke="#b0b0b0" stroke-width="1"/>
<rect x="367.5" y="406.3" width="13" height="13" fill="#fff" stroke="#6f6f6f" stroke-width="1"/>
<path d="M369.5,412.8 L372.5,416.3 L378,408.8" fill="none" stroke="#222" stroke-width="1.6"/>
<text x="417.4" y="418.0" font-size="13" font-weight="bold" fill="#333" textLength="95.7" lengthAdjust="spacingAndGlyphs">Angle Resolution</text>
<rect x="358.5" y="432.9" width="279" height="40.0" fill="url(#gAcc)" stroke="#b0b0b0" stroke-width="1"/>
<rect x="367.5" y="446.4" width="13" height="13" fill="#fff" stroke="#6f6f6f" stroke-width="1"/>
<text x="417.4" y="458.09999999999997" font-size="13" font-weight="bold" fill="#333" textLength="97.5" lengthAdjust="spacingAndGlyphs">Program Transfer</text>
<rect x="358.5" y="472.9" width="279" height="39.80000000000007" fill="url(#gAcc)" stroke="#b0b0b0" stroke-width="1"/>
<text x="417.4" y="498.09999999999997" font-size="13" font-weight="bold" fill="#333" textLength="82.6" lengthAdjust="spacingAndGlyphs">Material Setup</text>
<rect x="356.5" y="959.5" width="109.30000000000001" height="37" fill="url(#gBtn)" stroke="#adadad" stroke-width="1"/>
<rect x="373" y="965" width="25.5" height="26" fill="#000" rx="3"/>
<rect x="378.5" y="970" width="2.8" height="16" fill="#fff"/>
<path d="M393,970 L382.5,978 L393,986 Z" fill="#fff"/>
<text x="404" y="983" font-size="13.5" font-weight="bold" fill="#2b2b38" textLength="48.6" lengthAdjust="spacingAndGlyphs">Previous</text>
<rect x="471.3" y="959.5" width="89.30000000000001" height="37" fill="url(#gBtn)" stroke="#adadad" stroke-width="1"/>
<rect x="488.9" y="965" width="25.5" height="26" fill="#000" rx="3"/>
<rect x="506.4" y="970" width="2.8" height="16" fill="#fff"/>
<path d="M494.4,970 L504.9,978 L494.4,986 Z" fill="#fff"/>
<text x="520" y="983" font-size="13.5" font-weight="bold" fill="#2b2b38" textLength="26.7" lengthAdjust="spacingAndGlyphs">Next</text>
<line x1="637.5" y1="61.5" x2="637.5" y2="1001" stroke="#a8a8a8" stroke-width="1"/>
<rect x="637.5" y="61" width="802" height="2.8" fill="#aaaaaa"/>
<rect x="1436.5" y="61" width="2.8" height="940" fill="#aaaaaa"/>
<rect x="643.5" y="63.5" width="793" height="219" fill="#fff" stroke="#b4b4b4" stroke-width="1"/>
<line x1="643.5" y1="84.5" x2="1436.5" y2="84.5" stroke="#b4b4b4" stroke-width="1"/>
<text x="655.3" y="79.8" font-size="13" fill="#1a1a1a" textLength="175.7" lengthAdjust="spacingAndGlyphs">Machine Angle Correction Center</text>
<rect x="648.5" y="91.5" width="33" height="27" fill="#fff" stroke="#b4b4b4" stroke-width="1"/>
<rect x="648.5" y="123.5" width="33" height="27" fill="#fff" stroke="#b4b4b4" stroke-width="1"/>
<rect x="648.5" y="155.5" width="33" height="27" fill="#fff" stroke="#b4b4b4" stroke-width="1"/>
<rect x="648.5" y="187.5" width="33" height="27" fill="#fff" stroke="#b4b4b4" stroke-width="1"/>
<path d="M657.5,97.5 L657.5,112.5 L673,112.5" fill="none" stroke="#111" stroke-width="2"/>
<path d="M662,100 Q668,100 670.5,106" fill="none" stroke="#111" stroke-width="2"/>
<path d="M667,105 L671,109 L674,104 Z" fill="#111"/>
<path d="M657.5,129 L657.5,144.5 L673,144.5" fill="none" stroke="#111" stroke-width="2"/>
<circle cx="667" cy="135.5" r="5.5" fill="none" stroke="#111" stroke-width="1.8"/>
<path d="M664,135.5 L667,133 L667,138 Z" fill="#111"/>
<line x1="666" y1="135.5" x2="670" y2="135.5" stroke="#111" stroke-width="1.5"/>
<path d="M657.5,161 L657.5,176.5 L665,176.5" fill="none" stroke="#111" stroke-width="2"/>
<line x1="662" y1="163" x2="671" y2="163" stroke="#111" stroke-width="1.8"/>
<path d="M670,160.5 L674,163 L670,165.5 Z" fill="#111"/>
<circle cx="670" cy="174" r="3.5" fill="#fff" stroke="#111" stroke-width="1.8"/>
<g transform="translate(648,186)">
<line x1="18.9" y1="6.8" x2="25.1" y2="13" stroke="#000" stroke-width="3" stroke-linecap="round"/>
<path d="M13.8,12.2 L19.5,9.3 L23,12.8 L20,18.5 Z" fill="#000"/>
<line x1="12" y1="12" x2="15.8" y2="15.8" stroke="#000" stroke-width="2.6" stroke-linecap="round"/>
<path d="M14.5,15.5 L16.8,17.2 L9,23.8 L8.2,23.5 Z" fill="#000"/>
<path d="M18.8,20.3 L21.5,23 L25.5,17.8" fill="none" stroke="#000" stroke-width="2"/>
</g>
<line x1="691.5" y1="90" x2="691.5" y2="276.5" stroke="#b4b4b4" stroke-width="1"/>
<line x1="991.5" y1="90" x2="991.5" y2="276.5" stroke="#b4b4b4" stroke-width="1"/>
<text x="701.4" y="102.5" font-size="12.5" fill="#333" textLength="48.3" lengthAdjust="spacingAndGlyphs">Footprint</text>
<rect x="701.5" y="114.5" width="279.5" height="162.5" fill="#fff" stroke="#c4c4c4" stroke-width="1"/>
<rect x="925.5" y="91.5" width="13.5" height="13" fill="#111" rx="1.5"/>
<rect x="928.5" y="94.5" width="1.8" height="7" fill="#fff"/>
<path d="M936.0,94.5 L931.0,98 L936.0,101.5 Z" fill="#fff"/>
<rect x="959.5" y="91.5" width="13.5" height="13" fill="#111" rx="1.5"/>
<rect x="968.2" y="94.5" width="1.8" height="7" fill="#fff"/>
<path d="M962.5,94.5 L967.5,98 L962.5,101.5 Z" fill="#fff"/>
<path d="M1010,98 A5.5,5.5 0 1 1 1021,99" fill="none" stroke="#111" stroke-width="1.8"/>
<path d="M1007,96 L1013,96 L1010,101 Z" fill="#111"/>
<text x="1012" y="106" font-size="7" font-weight="bold" fill="#111" textLength="8" lengthAdjust="spacingAndGlyphs">90</text>
<path d="M1044,98 A5.5,5.5 0 1 1 1055,99" fill="none" stroke="#111" stroke-width="1.8"/>
<path d="M1041,96 L1047,96 L1044,101 Z" fill="#111"/>
<text x="1044" y="106" font-size="7" font-weight="bold" fill="#111" textLength="12" lengthAdjust="spacingAndGlyphs">180</text>
<path d="M1078,98 A5.5,5.5 0 1 1 1089,99" fill="none" stroke="#111" stroke-width="1.8"/>
<path d="M1075,96 L1081,96 L1078,101 Z" fill="#111"/>
<text x="1078" y="106" font-size="7" font-weight="bold" fill="#111" textLength="12" lengthAdjust="spacingAndGlyphs">270</text>
<line x1="1102.5" y1="92.5" x2="1102.5" y2="105.5" stroke="#c0c0c0" stroke-width="1"/>
<path d="M1118,95 Q1123,95 1124.5,101" fill="none" stroke="#111" stroke-width="1.7"/>
<path d="M1121.5,100 L1124.5,104 L1127,99.5 Z" fill="#111"/>
<circle cx="1156" cy="99.5" r="6.2" fill="none" stroke="#111" stroke-width="2.3"/>
<path d="M1152.3,99.8 A3.8,3.8 0 0 1 1159,97.5 L1160.3,96.3 L1160.3,100.2 L1156.5,100.2 L1157.7,99 A2.2,2.2 0 0 0 1154.2,99.8 Z" fill="#111"/>
<path d="M1159.7,99.2 A3.8,3.8 0 0 1 1153,101.5 L1151.7,102.7 L1151.7,98.8 L1155.5,98.8 L1154.3,100 A2.2,2.2 0 0 0 1157.8,99.2 Z" fill="#111"/>
<rect x="1195.5" y="87.5" width="99" height="23" fill="#fff" stroke="#a8a8a8" stroke-width="1"/>
<g transform="translate(1194.5,85)">
<line x1="18.9" y1="6.8" x2="25.1" y2="13" stroke="#000" stroke-width="3" stroke-linecap="round"/>
<path d="M13.8,12.2 L19.5,9.3 L23,12.8 L20,18.5 Z" fill="#000"/>
<line x1="12" y1="12" x2="15.8" y2="15.8" stroke="#000" stroke-width="2.6" stroke-linecap="round"/>
<path d="M14.5,15.5 L16.8,17.2 L9,23.8 L8.2,23.5 Z" fill="#000"/>
<path d="M18.8,20.3 L21.5,23 L25.5,17.8" fill="none" stroke="#000" stroke-width="2"/>
</g>
<text x="1228" y="103.5" font-size="12.5" fill="#222" textLength="41.6" lengthAdjust="spacingAndGlyphs">Confirm</text>
<path d="M1414.14,95.31 L1414.22,93.56 L1415.78,93.56 L1415.86,95.31 L1416.65,95.64 L1417.94,94.45 L1419.05,95.56 L1417.86,96.85 L1418.19,97.64 L1419.94,97.72 L1419.94,99.28 L1418.19,99.36 L1417.86,100.15 L1419.05,101.44 L1417.94,102.55 L1416.65,101.36 L1415.86,101.69 L1415.78,103.44 L1414.22,103.44 L1414.14,101.69 L1413.35,101.36 L1412.06,102.55 L1410.95,101.44 L1412.14,100.15 L1411.81,99.36 L1410.06,99.28 L1410.06,97.72 L1411.81,97.64 L1412.14,96.85 L1410.95,95.56 L1412.06,94.45 L1413.35,95.64 Z" fill="#111"/>
<circle cx="1415" cy="98.5" r="3.3" fill="#111"/>
<circle cx="1415" cy="98.5" r="1.4" fill="#fff"/>
<path d="M1420.76,100.61 L1420.82,99.26 L1422.18,99.26 L1422.24,100.61 L1422.91,100.93 L1424.00,100.14 L1424.85,101.20 L1423.83,102.09 L1423.99,102.81 L1425.30,103.17 L1424.99,104.50 L1423.66,104.25 L1423.20,104.83 L1423.74,106.07 L1422.51,106.66 L1421.87,105.47 L1421.13,105.47 L1420.49,106.66 L1419.26,106.07 L1419.80,104.83 L1419.34,104.25 L1418.01,104.50 L1417.70,103.17 L1419.01,102.81 L1419.17,102.09 L1418.15,101.20 L1419.00,100.14 L1420.09,100.93 Z" fill="#111"/>
<circle cx="1421.5" cy="103" r="2.5" fill="#111"/>
<circle cx="1421.5" cy="103" r="1.1" fill="#fff"/>
<text x="1000.2" y="130.7" font-size="12.5" fill="#333" textLength="94.6" lengthAdjust="spacingAndGlyphs">Reference Feature</text>
<text x="1000.2" y="158.5" font-size="12.5" fill="#333" textLength="56.9" lengthAdjust="spacingAndGlyphs">CAD Angle</text>
<text x="1000.2" y="186.6" font-size="12.5" fill="#333" textLength="78.6" lengthAdjust="spacingAndGlyphs">Machine Angle</text>
<text x="1000.2" y="214.8" font-size="12.5" fill="#333" textLength="91.4" lengthAdjust="spacingAndGlyphs">Features Affected</text>
<text x="1000.2" y="241" font-size="12.5" fill="#333" textLength="68.1" lengthAdjust="spacingAndGlyphs">Package Link</text>
<rect x="1099.5" y="115.5" width="281" height="21" fill="#fff" stroke="#a8a8a8" stroke-width="1"/>
<rect x="1364.5" y="117.5" width="15" height="17" fill="#e6e6e6" stroke="#b0b0b0" stroke-width="1"/>
<path d="M1368.5,124 L1372,127.5 L1375.5,124" fill="none" stroke="#555" stroke-width="1.3"/>
<text x="1385.3" y="128" font-size="12" fill="#333" textLength="18.5" lengthAdjust="spacingAndGlyphs">Top</text>
<rect x="1099.5" y="143.5" width="274" height="21" fill="#fff" stroke="#b8b8b8" stroke-width="1"/>
<text x="1104" y="158.5" font-size="12.5" fill="#333" textLength="15.3" lengthAdjust="spacingAndGlyphs">0.0</text>
<text x="1378.3" y="155.6" font-size="12" fill="#333" textLength="25.6" lengthAdjust="spacingAndGlyphs">CCW</text>
<rect x="1099.5" y="171.5" width="270" height="21.5" fill="#fff" stroke="#7c7c7c" stroke-width="1"/>
<text x="1104" y="186.6" font-size="12.5" fill="#333" textLength="15.3" lengthAdjust="spacingAndGlyphs">0.0</text>
<path d="M1384,185.4 A5.8,5.8 0 1 1 1391.5,187.7" fill="none" stroke="#111" stroke-width="1.9"/>
<path d="M1389.5,185.5 L1394.5,187 L1391,191 Z" fill="#111"/>
<circle cx="1389" cy="182.5" r="1.5" fill="#111"/>
<rect x="1099.5" y="199.5" width="304" height="21.5" fill="#fff" stroke="#a8a8a8" stroke-width="1"/>
<rect x="1387.5" y="201.5" width="15" height="17.5" fill="#e6e6e6" stroke="#b0b0b0" stroke-width="1"/>
<path d="M1391.5,208.5 L1395,212 L1398.5,208.5" fill="none" stroke="#555" stroke-width="1.3"/>
<rect x="1099.5" y="225.5" width="304" height="21" fill="#fff" stroke="#c8c8c8" stroke-width="1"/>
<line x1="1000" y1="256.5" x2="1404" y2="256.5" stroke="#b0b0b0" stroke-width="1"/>
<rect x="1000.5" y="264.5" width="9.5" height="9.5" fill="#0a7f0a"/>
<text x="1015" y="274" font-size="12.5" fill="#333" textLength="55" lengthAdjust="spacingAndGlyphs">Confirmed</text>
<text x="1075.6" y="274" font-size="12.5" fill="#333" textLength="19.2" lengthAdjust="spacingAndGlyphs">145</text>
<rect x="1112" y="264.5" width="10" height="9.5" fill="#0000ee"/>
<text x="1126.8" y="274" font-size="12.5" fill="#333" textLength="68.4" lengthAdjust="spacingAndGlyphs">Unconfirmed</text>
<text x="1200.3" y="274" font-size="12.5" fill="#333" textLength="6.4" lengthAdjust="spacingAndGlyphs">0</text>
<rect x="1230" y="264.5" width="10" height="9.5" fill="#ee0000"/>
<text x="1245.7" y="274" font-size="12.5" fill="#333" textLength="30.4" lengthAdjust="spacingAndGlyphs">Errors</text>
<text x="1280" y="274" font-size="12.5" fill="#333" textLength="6.4" lengthAdjust="spacingAndGlyphs">0</text>
<rect x="646.5" y="312.5" width="790" height="645" fill="#fff" stroke="#d0d0d0" stroke-width="1"/>
<rect x="1420" y="313" width="16" height="645" fill="#efefef"/>
<rect x="1420" y="402" width="16" height="466" fill="#c2c2c2"/>
<path d="M1425,325 L1428.5,320.5 L1432,325" fill="none" stroke="#606060" stroke-width="1.6"/>
<path d="M1425,946 L1428.5,950.5 L1432,946" fill="none" stroke="#606060" stroke-width="1.6"/>
<rect x="647" y="958" width="789" height="16" fill="#efefef"/>
<rect x="874" y="958" width="318" height="16" fill="#c2c2c2"/>
<path d="M658,962.5 L654,966 L658,969.5" fill="none" stroke="#606060" stroke-width="1.6"/>
<path d="M1409,962.5 L1413,966 L1409,969.5" fill="none" stroke="#606060" stroke-width="1.6"/>
<rect x="1400.5" y="935.5" width="19" height="19" fill="#eeeeee" stroke="#aaaaaa" stroke-width="1"/>
<circle cx="1410" cy="945" r="4.5" fill="#3c9a3c" stroke="#999" stroke-width="1.2"/>
<path d="M1408,943 L1412,945 L1408,947 Z" fill="#fff"/>
<rect x="647" y="974" width="789" height="24" fill="#0070c9"/>
<text x="651.4" y="990.8" font-size="12.2" fill="#fff" textLength="122.6" lengthAdjust="spacingAndGlyphs">(1.9706 , 1.6138) Inches</text>
<rect x="1191.7" y="984.9" width="8.7" height="7.9" fill="#e8b820"/>
<path d="M1192.5,992.8 L1194.5,986 L1195.8,986 L1193.8,992.8 Z" fill="#222"/>
<path d="M1195.5,992.8 L1197.5,986 L1198.8,986 L1196.8,992.8 Z" fill="#222"/>
<path d="M1198.5,992.8 L1200.5,986 L1201.8,986 L1199.8,992.8 Z" fill="#222"/>
<path d="M1197.5,985 L1197.5,980.5 A3.5,3.5 0 0 1 1204.5,980.5 L1204.5,983" fill="none" stroke="#e8e8e8" stroke-width="1.8"/>
<rect x="1213" y="977.9" width="15.5" height="15.8" fill="none" stroke="#222" stroke-width="0.9" stroke-dasharray="1.6,1.4"/>
<line x1="1219.7" y1="986.2" x2="1216.2" y2="990.2" stroke="#d6aa60" stroke-width="2.4" stroke-linecap="round"/>
<circle cx="1222.2" cy="983.7" r="3.7" fill="#e4f2fb" stroke="#9aa8b0" stroke-width="1.3"/>
<line x1="1245.3" y1="988.6" x2="1241.8" y2="992.6" stroke="#d6aa60" stroke-width="2.4" stroke-linecap="round"/>
<circle cx="1247.8" cy="986.1" r="3.7" fill="#e4f2fb" stroke="#9aa8b0" stroke-width="1.3"/>
<text x="1236.8" y="983.7" font-size="8" font-weight="bold" fill="#505a60" textLength="14.9" lengthAdjust="spacingAndGlyphs">100</text>
<line x1="1268.5" y1="988.6" x2="1265" y2="992.6" stroke="#d6aa60" stroke-width="2.4" stroke-linecap="round"/>
<circle cx="1271" cy="986.1" r="3.7" fill="#e4f2fb" stroke="#9aa8b0" stroke-width="1.3"/>
<text x="1259.6" y="983.7" font-size="8" font-weight="bold" fill="#505a60" textLength="14" lengthAdjust="spacingAndGlyphs">ALL</text>
<line x1="1283.9" y1="989.2" x2="1280.4" y2="993.2" stroke="#d6aa60" stroke-width="2.4" stroke-linecap="round"/>
<circle cx="1286.4" cy="986.7" r="3.7" fill="#e4f2fb" stroke="#9aa8b0" stroke-width="1.3"/>
<rect x="1285" y="980" width="6" height="2.2" fill="#111"/>
<rect x="1292.5" y="980" width="6" height="2.2" fill="#111"/>
<line x1="1307.4" y1="989.2" x2="1303.9" y2="993.2" stroke="#d6aa60" stroke-width="2.4" stroke-linecap="round"/>
<circle cx="1309.9" cy="986.7" r="3.7" fill="#e4f2fb" stroke="#9aa8b0" stroke-width="1.3"/>
<rect x="1314" y="981.3" width="7" height="2.2" fill="#555"/>
<line x1="1394.8" y1="989.2" x2="1391.3" y2="993.2" stroke="#d6aa60" stroke-width="2.4" stroke-linecap="round"/>
<circle cx="1397.3" cy="986.7" r="3.7" fill="#e4f2fb" stroke="#9aa8b0" stroke-width="1.3"/>
<rect x="1402" y="981" width="6.5" height="2.2" fill="#555"/>
<rect x="1404.1" y="978.8" width="2.2" height="6.5" fill="#555"/>
<line x1="1418.5" y1="989.2" x2="1415" y2="993.2" stroke="#d6aa60" stroke-width="2.4" stroke-linecap="round"/>
<circle cx="1421" cy="986.7" r="3.7" fill="#e4f2fb" stroke="#9aa8b0" stroke-width="1.3"/>
<rect x="1418.8" y="979.5" width="6" height="2" fill="#111"/>
<rect x="1420.8" y="977.5" width="2" height="6" fill="#111"/>
<rect x="1426.7" y="979.5" width="6" height="2" fill="#111"/>
<rect x="1428.7" y="977.5" width="2" height="6" fill="#111"/>
<rect x="1328.5" y="976" width="56.5" height="20" fill="#fff"/>
<text x="1333" y="990.7" font-size="12.5" fill="#333" textLength="29.3" lengthAdjust="spacingAndGlyphs">335%</text>
<rect x="1369.5" y="978.5" width="14.5" height="16" fill="#f0f0f0" stroke="#999" stroke-width="1"/>
<path d="M1373,985 L1376.7,981 L1380.5,985" fill="none" stroke="#555" stroke-width="1.2"/>
<path d="M1373,988 L1376.7,992 L1380.5,988" fill="none" stroke="#555" stroke-width="1.2"/>
<clipPath id="cv"><rect x="647" y="313" width="773" height="645"/></clipPath>
<g clip-path="url(#cv)" font-family="Liberation Sans, sans-serif">
<line x1="647" y1="327" x2="836.5" y2="327" stroke="#000" stroke-width="2"/>
<line x1="836.5" y1="313" x2="836.5" y2="327" stroke="#000" stroke-width="1.2"/>
<rect x="815.8" y="310" width="19.5" height="14.699999999999989" fill="#000"/>
<circle cx="825.7" cy="344.8" r="19.5" fill="#000"/>
<rect x="853.5" y="300" width="103.5" height="50.5" fill="none" stroke="#000" stroke-width="1.6"/>
<rect x="855.2" y="306" width="36.6" height="10" fill="#000" rx="5"/>
<rect x="855.2" y="320" width="36.6" height="10" fill="#000" rx="5"/>
<rect x="855.2" y="336" width="36.6" height="10" fill="#000" rx="5"/>
<rect x="918.3" y="306" width="36.4" height="10" fill="#000" rx="5"/>
<rect x="918.3" y="320" width="36.4" height="10" fill="#000" rx="5"/>
<rect x="920" y="336" width="32.60000000000002" height="10" fill="#ff0000"/>
<line x1="874" y1="334.3" x2="914" y2="313" stroke="#3a9a3a" stroke-width="2.4" opacity="0.65"/>
<line x1="914" y1="313" x2="955.8" y2="335.2" stroke="#3a9a3a" stroke-width="2.4" opacity="0.65"/>
<text x="884.7" y="372.8" font-size="24.64" fill="#000" textLength="40.7" lengthAdjust="spacingAndGlyphs">U23</text>
<circle cx="992.3" cy="344.7" r="19.3" fill="#000"/>
<rect x="965.1" y="378.1" width="24.100000000000023" height="39.299999999999955" fill="none" stroke="#000" stroke-width="1.6"/>
<rect x="970" y="383" width="14.399999999999977" height="11.600000000000023" fill="#000"/>
<rect x="970" y="400.8" width="14.399999999999977" height="11.800000000000011" fill="#ff0000"/>
<line x1="971" y1="383" x2="983.4" y2="412.6" stroke="#2e8b2e" stroke-width="0.7" opacity="0.8"/>
<line x1="971" y1="412.6" x2="983.4" y2="383" stroke="#2e8b2e" stroke-width="0.7" opacity="0.8"/>
<text x="966" y="373.3" font-size="14.0" fill="#000" textLength="22.3" lengthAdjust="spacingAndGlyphs">R30</text>
<rect x="997.6" y="378" width="22.899999999999977" height="38" fill="none" stroke="#000" stroke-width="1.6"/>
<rect x="997.6" y="416" width="22.899999999999977" height="39" fill="none" stroke="#000" stroke-width="1.6"/>
<rect x="1002.3000000000001" y="383" width="13.499999999999886" height="11.600000000000023" fill="#ff0000"/>
<rect x="1002.3000000000001" y="400.8" width="13.499999999999886" height="11.800000000000011" fill="#000"/>
<line x1="1003.3000000000001" y1="383" x2="1014.8" y2="412.6" stroke="#2e8b2e" stroke-width="0.7" opacity="0.8"/>
<line x1="1003.3000000000001" y1="412.6" x2="1014.8" y2="383" stroke="#2e8b2e" stroke-width="0.7" opacity="0.8"/>
<rect x="1002.3000000000001" y="421" width="13.499999999999886" height="11.600000000000023" fill="#000"/>
<rect x="1002.3000000000001" y="438.9" width="13.499999999999886" height="11.600000000000023" fill="#ff0000"/>
<line x1="1003.3000000000001" y1="421" x2="1014.8" y2="450.5" stroke="#2e8b2e" stroke-width="0.7" opacity="0.8"/>
<line x1="1003.3000000000001" y1="450.5" x2="1014.8" y2="421" stroke="#2e8b2e" stroke-width="0.7" opacity="0.8"/>
<rect x="1020.5" y="378" width="24.299999999999955" height="38" fill="none" stroke="#000" stroke-width="1.6"/>
<rect x="1020.5" y="416" width="24.299999999999955" height="39" fill="none" stroke="#000" stroke-width="1.6"/>
<rect x="1025.2" y="383" width="14.899999999999864" height="11.600000000000023" fill="#ff0000"/>
<rect x="1025.2" y="400.8" width="14.899999999999864" height="11.800000000000011" fill="#000"/>
<line x1="1026.2" y1="383" x2="1039.1" y2="412.6" stroke="#2e8b2e" stroke-width="0.7" opacity="0.8"/>
<line x1="1026.2" y1="412.6" x2="1039.1" y2="383" stroke="#2e8b2e" stroke-width="0.7" opacity="0.8"/>
<rect x="1025.2" y="421" width="14.899999999999864" height="11.600000000000023" fill="#000"/>
<rect x="1025.2" y="438.9" width="14.899999999999864" height="11.600000000000023" fill="#ff0000"/>
<line x1="1026.2" y1="421" x2="1039.1" y2="450.5" stroke="#2e8b2e" stroke-width="0.7" opacity="0.8"/>
<line x1="1026.2" y1="450.5" x2="1039.1" y2="421" stroke="#2e8b2e" stroke-width="0.7" opacity="0.8"/>
<rect x="1044.8" y="378" width="23.90000000000009" height="38" fill="none" stroke="#000" stroke-width="1.6"/>
<rect x="1044.8" y="416" width="23.90000000000009" height="39" fill="none" stroke="#000" stroke-width="1.6"/>
<rect x="1049.5" y="383" width="14.5" height="11.600000000000023" fill="#ff0000"/>
<rect x="1049.5" y="400.8" width="14.5" height="11.800000000000011" fill="#000"/>
<line x1="1050.5" y1="383" x2="1063.0" y2="412.6" stroke="#2e8b2e" stroke-width="0.7" opacity="0.8"/>
<line x1="1050.5" y1="412.6" x2="1063.0" y2="383" stroke="#2e8b2e" stroke-width="0.7" opacity="0.8"/>
<rect x="1049.5" y="421" width="14.5" height="11.600000000000023" fill="#000"/>
<rect x="1049.5" y="438.9" width="14.5" height="11.600000000000023" fill="#ff0000"/>
<line x1="1050.5" y1="421" x2="1063.0" y2="450.5" stroke="#2e8b2e" stroke-width="0.7" opacity="0.8"/>
<line x1="1050.5" y1="450.5" x2="1063.0" y2="421" stroke="#2e8b2e" stroke-width="0.7" opacity="0.8"/>
<rect x="1068.7" y="378" width="24.700000000000045" height="38" fill="none" stroke="#000" stroke-width="1.6"/>
<rect x="1068.7" y="416" width="24.700000000000045" height="39" fill="none" stroke="#000" stroke-width="1.6"/>
<rect x="1073.4" y="383" width="15.299999999999955" height="11.600000000000023" fill="#ff0000"/>
<rect x="1073.4" y="400.8" width="15.299999999999955" height="11.800000000000011" fill="#000"/>
<line x1="1074.4" y1="383" x2="1087.7" y2="412.6" stroke="#2e8b2e" stroke-width="0.7" opacity="0.8"/>
<line x1="1074.4" y1="412.6" x2="1087.7" y2="383" stroke="#2e8b2e" stroke-width="0.7" opacity="0.8"/>
<rect x="1073.4" y="421" width="15.299999999999955" height="11.600000000000023" fill="#000"/>
<rect x="1073.4" y="438.9" width="15.299999999999955" height="11.600000000000023" fill="#ff0000"/>
<line x1="1074.4" y1="421" x2="1087.7" y2="450.5" stroke="#2e8b2e" stroke-width="0.7" opacity="0.8"/>
<line x1="1074.4" y1="450.5" x2="1087.7" y2="421" stroke="#2e8b2e" stroke-width="0.7" opacity="0.8"/>
<text x="998" y="373.3" font-size="14.0" fill="#000" textLength="95.4" lengthAdjust="spacingAndGlyphs">R19R18R17R16</text>
<text x="998" y="468.4" font-size="14.0" fill="#000" textLength="70.4" lengthAdjust="spacingAndGlyphs">C23C22C21</text>
<text transform="translate(1114.6,455.3) rotate(-90)" font-size="23.52" fill="#000" textLength="38.5" lengthAdjust="spacingAndGlyphs">C20</text>
<text x="958.8" y="450.5" font-size="21.84" fill="#000" textLength="38.5" lengthAdjust="spacingAndGlyphs">C53</text>
<rect x="958.4" y="458" width="39.60000000000002" height="22.600000000000023" fill="none" stroke="#000" stroke-width="1.6"/>
<rect x="963.1519999999999" y="462.52" width="11.88000000000011" height="13.56000000000006" fill="#ff0000"/>
<rect x="981.3679999999999" y="462.52" width="11.88000000000011" height="13.56000000000006" fill="#000"/>
<line x1="963.1519999999999" y1="463.52" x2="993.248" y2="475.08000000000004" stroke="#2e8b2e" stroke-width="0.7" opacity="0.8"/>
<line x1="963.1519999999999" y1="475.08000000000004" x2="993.248" y2="463.52" stroke="#2e8b2e" stroke-width="0.7" opacity="0.8"/>
<rect x="948.7" y="474.8" width="48.09999999999991" height="67.09999999999997" fill="none" stroke="#000" stroke-width="1.6"/>
<rect x="956.7" y="485.2" width="9.399999999999977" height="14.800000000000011" fill="#000"/>
<rect x="956.7" y="517.8" width="9.399999999999977" height="14.600000000000023" fill="#000"/>
<rect x="968.5" y="485.2" width="9.399999999999977" height="14.800000000000011" fill="#000"/>
<rect x="968.5" y="517.8" width="9.399999999999977" height="14.600000000000023" fill="#000"/>
<rect x="980.3" y="485.2" width="9.400000000000091" height="14.800000000000011" fill="#ff0000"/>
<rect x="980.3" y="517.8" width="9.400000000000091" height="14.600000000000023" fill="#000"/>
<line x1="957" y1="486" x2="989" y2="532" stroke="#2f9a2f" stroke-width="1.8" opacity="0.6" stroke-linecap="round"/>
<line x1="957" y1="532" x2="989" y2="486" stroke="#2f9a2f" stroke-width="1.8" opacity="0.6" stroke-linecap="round"/>
<text x="906.8" y="515.5" font-size="23.52" fill="#000" textLength="40.0" lengthAdjust="spacingAndGlyphs">U22</text>
<rect x="600" y="500.8" width="104.20000000000005" height="96.59999999999997" fill="none" stroke="#000" stroke-width="1.6"/>
<rect x="637.3" y="505.3" width="5.4" height="23.6" fill="#000" rx="0.8"/>
<rect x="637.3" y="571.3" width="5.4" height="23.8" fill="#000" rx="0.8"/>
<rect x="645.3" y="505.3" width="5.4" height="23.6" fill="#000" rx="0.8"/>
<rect x="645.3" y="571.3" width="5.4" height="23.8" fill="#000" rx="0.8"/>
<rect x="653.3" y="505.3" width="5.4" height="23.6" fill="#000" rx="0.8"/>
<rect x="653.3" y="571.3" width="5.4" height="23.8" fill="#000" rx="0.8"/>
<rect x="661.3" y="505.3" width="5.4" height="23.6" fill="#000" rx="0.8"/>
<rect x="661.3" y="571.3" width="5.4" height="23.8" fill="#000" rx="0.8"/>
<rect x="669.3" y="505.3" width="5.4" height="23.6" fill="#000" rx="0.8"/>
<rect x="669.3" y="571.3" width="5.4" height="23.8" fill="#000" rx="0.8"/>
<rect x="677.3" y="505.3" width="5.4" height="23.6" fill="#000" rx="0.8"/>
<rect x="677.3" y="571.3" width="5.4" height="23.8" fill="#000" rx="0.8"/>
<rect x="685.3" y="505.3" width="5.4" height="23.6" fill="#000" rx="0.8"/>
<rect x="685.3" y="571.3" width="5.4" height="23.8" fill="#000" rx="0.8"/>
<rect x="693.3" y="505.3" width="5.4" height="23.6" fill="#ff0000" rx="0.8"/>
<rect x="693.3" y="571.3" width="5.4" height="23.8" fill="#000" rx="0.8"/>
<line x1="623" y1="504.7" x2="698.5" y2="577.8" stroke="#2f9a2f" stroke-width="3.8" opacity="0.6" stroke-linecap="round"/>
<line x1="623" y1="577.8" x2="698.5" y2="504.7" stroke="#2f9a2f" stroke-width="3.8" opacity="0.6" stroke-linecap="round"/>
<text x="640" y="493.9" font-size="22.4" fill="#000" textLength="26" lengthAdjust="spacingAndGlyphs">J9</text>
<rect x="708.6" y="498.2" width="23.299999999999955" height="39.400000000000034" fill="none" stroke="#000" stroke-width="1.6"/>
<rect x="713.027" y="503.322" width="14.445999999999913" height="11.82000000000005" fill="#000"/>
<rect x="713.027" y="520.658" width="14.445999999999913" height="11.82000000000005" fill="#ff0000"/>
<line x1="714.027" y1="503.322" x2="726.473" y2="532.4780000000001" stroke="#2e8b2e" stroke-width="0.7" opacity="0.8"/>
<line x1="714.027" y1="532.4780000000001" x2="726.473" y2="503.322" stroke="#2e8b2e" stroke-width="0.7" opacity="0.8"/>
<text x="709" y="494.3" font-size="14.56" fill="#000" textLength="22.6" lengthAdjust="spacingAndGlyphs">C18</text>
<rect x="708.6" y="562.7" width="23.299999999999955" height="39.299999999999955" fill="none" stroke="#000" stroke-width="1.6"/>
<rect x="713.027" y="567.8090000000001" width="14.445999999999913" height="11.789999999999964" fill="#ff0000"/>
<rect x="713.027" y="585.101" width="14.445999999999913" height="11.789999999999964" fill="#000"/>
<line x1="714.027" y1="567.8090000000001" x2="726.473" y2="596.891" stroke="#2e8b2e" stroke-width="0.7" opacity="0.8"/>
<line x1="714.027" y1="596.891" x2="726.473" y2="567.8090000000001" stroke="#2e8b2e" stroke-width="0.7" opacity="0.8"/>
<text x="709" y="559.6" font-size="14.56" fill="#000" textLength="22.6" lengthAdjust="spacingAndGlyphs">C32</text>
<rect x="736" y="500.7" width="104.79999999999995" height="96.69999999999999" fill="none" stroke="#000" stroke-width="1.6"/>
<rect x="741.6" y="505.3" width="5.2" height="23.8" fill="#000" rx="0.8"/>
<rect x="741.6" y="571.3" width="5.2" height="23.8" fill="#000" rx="0.8"/>
<rect x="749.65" y="505.3" width="5.2" height="23.8" fill="#000" rx="0.8"/>
<rect x="749.65" y="571.3" width="5.2" height="23.8" fill="#000" rx="0.8"/>
<rect x="757.7" y="505.3" width="5.2" height="23.8" fill="#000" rx="0.8"/>
<rect x="757.7" y="571.3" width="5.2" height="23.8" fill="#000" rx="0.8"/>
<rect x="765.75" y="505.3" width="5.2" height="23.8" fill="#000" rx="0.8"/>
<rect x="765.75" y="571.3" width="5.2" height="23.8" fill="#000" rx="0.8"/>
<rect x="773.8000000000001" y="505.3" width="5.2" height="23.8" fill="#000" rx="0.8"/>
<rect x="773.8000000000001" y="571.3" width="5.2" height="23.8" fill="#000" rx="0.8"/>
<rect x="781.85" y="505.3" width="5.2" height="23.8" fill="#000" rx="0.8"/>
<rect x="781.85" y="571.3" width="5.2" height="23.8" fill="#000" rx="0.8"/>
<rect x="789.9" y="505.3" width="5.2" height="23.8" fill="#000" rx="0.8"/>
<rect x="789.9" y="571.3" width="5.2" height="23.8" fill="#000" rx="0.8"/>
<rect x="797.95" y="505.3" width="5.2" height="23.8" fill="#000" rx="0.8"/>
<rect x="797.95" y="571.3" width="5.2" height="23.8" fill="#000" rx="0.8"/>
<rect x="806.0" y="505.3" width="5.2" height="23.8" fill="#000" rx="0.8"/>
<rect x="806.0" y="571.3" width="5.2" height="23.8" fill="#000" rx="0.8"/>
<rect x="814.0500000000001" y="505.3" width="5.2" height="23.8" fill="#000" rx="0.8"/>
<rect x="814.0500000000001" y="571.3" width="5.2" height="23.8" fill="#000" rx="0.8"/>
<rect x="822.1" y="505.3" width="5.2" height="23.8" fill="#000" rx="0.8"/>
<rect x="822.1" y="571.3" width="5.2" height="23.8" fill="#000" rx="0.8"/>
<rect x="830.1500000000001" y="505.3" width="5.2" height="23.8" fill="#ff0000" rx="0.8"/>
<rect x="830.1500000000001" y="571.3" width="5.2" height="23.8" fill="#000" rx="0.8"/>
<line x1="760.5" y1="504.7" x2="835.7" y2="577.8" stroke="#2f9a2f" stroke-width="3.8" opacity="0.6" stroke-linecap="round"/>
<line x1="760.5" y1="577.8" x2="835.7" y2="504.7" stroke="#2f9a2f" stroke-width="3.8" opacity="0.6" stroke-linecap="round"/>
<text x="768.4" y="493.5" font-size="24.64" fill="#000" textLength="38.4" lengthAdjust="spacingAndGlyphs">U11</text>
<rect x="845.2" y="496.7" width="23.199999999999932" height="39.30000000000001" fill="none" stroke="#000" stroke-width="1.6"/>
<rect x="849.6080000000001" y="501.80899999999997" width="14.3839999999999" height="11.790000000000077" fill="#000"/>
<rect x="849.6080000000001" y="519.101" width="14.3839999999999" height="11.789999999999964" fill="#ff0000"/>
<line x1="850.6080000000001" y1="501.80899999999997" x2="862.992" y2="530.891" stroke="#2e8b2e" stroke-width="0.7" opacity="0.8"/>
<line x1="850.6080000000001" y1="530.891" x2="862.992" y2="501.80899999999997" stroke="#2e8b2e" stroke-width="0.7" opacity="0.8"/>
<text x="845.5" y="492.6" font-size="14.56" fill="#000" textLength="23.0" lengthAdjust="spacingAndGlyphs">C19</text>
<rect x="845.2" y="561.2" width="23.199999999999932" height="39.299999999999955" fill="none" stroke="#000" stroke-width="1.6"/>
<rect x="849.6080000000001" y="566.3090000000001" width="14.3839999999999" height="11.789999999999964" fill="#ff0000"/>
<rect x="849.6080000000001" y="583.601" width="14.3839999999999" height="11.789999999999964" fill="#000"/>
<line x1="850.6080000000001" y1="566.3090000000001" x2="862.992" y2="595.391" stroke="#2e8b2e" stroke-width="0.7" opacity="0.8"/>
<line x1="850.6080000000001" y1="595.391" x2="862.992" y2="566.3090000000001" stroke="#2e8b2e" stroke-width="0.7" opacity="0.8"/>
<text x="845.5" y="556.5" font-size="14.56" fill="#000" textLength="23.0" lengthAdjust="spacingAndGlyphs">C33</text>
<rect x="1002" y="494.6" width="73.20000000000005" height="99.89999999999998" fill="none" stroke="#000" stroke-width="1.6"/>
<rect x="1005.3" y="496" width="7.2999999999999545" height="22.200000000000045" fill="#000"/>
<rect x="1005.3" y="569.7" width="7.2999999999999545" height="23.59999999999991" fill="#000"/>
<rect x="1013.5999999999999" y="496" width="7.2999999999999545" height="22.200000000000045" fill="#000"/>
<rect x="1013.5999999999999" y="569.7" width="7.2999999999999545" height="23.59999999999991" fill="#000"/>
<rect x="1021.9" y="496" width="7.300000000000068" height="22.200000000000045" fill="#000"/>
<rect x="1021.9" y="569.7" width="7.300000000000068" height="23.59999999999991" fill="#000"/>
<rect x="1030.2" y="496" width="7.2999999999999545" height="22.200000000000045" fill="#000"/>
<rect x="1030.2" y="569.7" width="7.2999999999999545" height="23.59999999999991" fill="#000"/>
<rect x="1038.5" y="496" width="7.2999999999999545" height="22.200000000000045" fill="#000"/>
<rect x="1038.5" y="569.7" width="7.2999999999999545" height="23.59999999999991" fill="#000"/>
<rect x="1046.8" y="496" width="7.2999999999999545" height="22.200000000000045" fill="#000"/>
<rect x="1046.8" y="569.7" width="7.2999999999999545" height="23.59999999999991" fill="#000"/>
<rect x="1055.1" y="496" width="7.2999999999999545" height="22.200000000000045" fill="#000"/>
<rect x="1055.1" y="569.7" width="7.2999999999999545" height="23.59999999999991" fill="#000"/>
<rect x="1063.3999999999999" y="496" width="7.2999999999999545" height="22.200000000000045" fill="#ff0000"/>
<rect x="1063.3999999999999" y="569.7" width="7.2999999999999545" height="23.59999999999991" fill="#000"/>
<line x1="1018" y1="494.2" x2="1071.2" y2="574.4" stroke="#2f9a2f" stroke-width="3.8" opacity="0.6" stroke-linecap="round"/>
<line x1="1018" y1="574.4" x2="1071.2" y2="494.2" stroke="#2f9a2f" stroke-width="3.8" opacity="0.6" stroke-linecap="round"/>
<text x="1024" y="552" font-size="24.64" fill="#000" textLength="27" lengthAdjust="spacingAndGlyphs">U7</text>
<rect x="1073.5" y="508.8" width="32.5" height="65.19999999999999" fill="none" stroke="#000" stroke-width="1.6"/>
<rect x="1075.2" y="515.9" width="29.799999999999955" height="50.30000000000007" fill="#ff0000"/>
<line x1="1077.2" y1="517.9" x2="1103" y2="564.2" stroke="#6a5a10" stroke-width="1.3"/>
<line x1="1077.2" y1="564.2" x2="1103" y2="517.9" stroke="#6a5a10" stroke-width="1.3"/>
<text transform="translate(1097.5,503.5) rotate(-90)" font-size="23.52" fill="#000" textLength="33.7" lengthAdjust="spacingAndGlyphs">TP1</text>
<rect x="959.5" y="548" width="35.39999999999998" height="67.29999999999995" fill="none" stroke="#000" stroke-width="1.6"/>
<circle cx="977.2" cy="565.5" r="10.2" fill="#000"/>
<rect x="966.8" y="587.4" width="20.5" height="20.600000000000023" fill="#ff0000"/>
<text x="922.6" y="588" font-size="23.52" fill="#000" textLength="34.6" lengthAdjust="spacingAndGlyphs">J14</text>
<rect x="1045.7" y="600.9" width="39.59999999999991" height="23.600000000000023" fill="none" stroke="#000" stroke-width="1.6"/>
<rect x="1050.452" y="605.62" width="11.88000000000011" height="14.159999999999968" fill="#000"/>
<rect x="1068.668" y="605.62" width="11.88000000000011" height="14.159999999999968" fill="#ff0000"/>
<line x1="1050.452" y1="606.62" x2="1080.548" y2="618.78" stroke="#2e8b2e" stroke-width="0.7" opacity="0.8"/>
<line x1="1050.452" y1="618.78" x2="1080.548" y2="606.62" stroke="#2e8b2e" stroke-width="0.7" opacity="0.8"/>
<text x="1008.6" y="619.3" font-size="22.4" fill="#000" textLength="35.9" lengthAdjust="spacingAndGlyphs">C35</text>
<circle cx="1121.8" cy="322.2" r="19.7" fill="#000"/>
<circle cx="1282.3" cy="322.2" r="19.7" fill="#000"/>
<circle cx="1379.2" cy="340.4" r="14.3" fill="#ff0000"/>
<text x="1376.2" y="360.8" font-size="23.52" fill="#000" textLength="27.9" lengthAdjust="spacingAndGlyphs">C2</text>
<rect x="1362.2" y="367.1" width="54.399999999999864" height="27.0" fill="none" stroke="#000" stroke-width="1.6"/>
<rect x="1368.728" y="372.5" width="16.319999999999936" height="16.200000000000045" fill="#000"/>
<rect x="1393.752" y="372.5" width="16.319999999999936" height="16.200000000000045" fill="#ff0000"/>
<line x1="1368.728" y1="373.5" x2="1410.072" y2="387.70000000000005" stroke="#2e8b2e" stroke-width="0.7" opacity="0.8"/>
<line x1="1368.728" y1="387.70000000000005" x2="1410.072" y2="373.5" stroke="#2e8b2e" stroke-width="0.7" opacity="0.8"/>
<circle cx="1131.5" cy="425.4" r="9.75" fill="#000"/>
<circle cx="1273" cy="425.4" r="9.75" fill="#000"/>
<text x="1180" y="406.8" font-size="22.4" fill="#000" textLength="38.1" lengthAdjust="spacingAndGlyphs">R33</text>
<rect x="1179.1" y="412.9" width="40.200000000000045" height="23.80000000000001" fill="none" stroke="#000" stroke-width="1.6"/>
<rect x="1183.924" y="417.65999999999997" width="12.059999999999945" height="14.28000000000003" fill="#000"/>
<rect x="1202.416" y="417.65999999999997" width="12.059999999999945" height="14.28000000000003" fill="#ff0000"/>
<line x1="1183.924" y1="418.65999999999997" x2="1214.4759999999999" y2="430.94" stroke="#2e8b2e" stroke-width="0.7" opacity="0.8"/>
<line x1="1183.924" y1="430.94" x2="1214.4759999999999" y2="418.65999999999997" stroke="#2e8b2e" stroke-width="0.7" opacity="0.8"/>
<text x="1129.7" y="467" font-size="22.4" fill="#000" textLength="38.5" lengthAdjust="spacingAndGlyphs">R32</text>
<rect x="1129.3" y="473.5" width="39.600000000000136" height="23.30000000000001" fill="none" stroke="#000" stroke-width="1.6"/>
<rect x="1134.052" y="478.16" width="11.88000000000011" height="13.979999999999961" fill="#000"/>
<rect x="1152.268" y="478.16" width="11.88000000000011" height="13.979999999999961" fill="#ff0000"/>
<line x1="1134.052" y1="479.16" x2="1164.1480000000001" y2="491.14" stroke="#2e8b2e" stroke-width="0.7" opacity="0.8"/>
<line x1="1134.052" y1="491.14" x2="1164.1480000000001" y2="479.16" stroke="#2e8b2e" stroke-width="0.7" opacity="0.8"/>
<circle cx="1138" cy="515.4" r="9.6" fill="#000"/>
<circle cx="1164" cy="515.4" r="9.6" fill="#000"/>
<text x="1131.3" y="535.5" font-size="22.4" fill="#000" textLength="27.2" lengthAdjust="spacingAndGlyphs">R3</text>
<rect x="1125.4" y="541.9" width="39.0" height="23.100000000000023" fill="none" stroke="#000" stroke-width="1.6"/>
<rect x="1130.0800000000002" y="546.52" width="11.700000000000045" height="13.860000000000014" fill="#000"/>
<rect x="1148.02" y="546.52" width="11.700000000000045" height="13.860000000000014" fill="#ff0000"/>
<line x1="1130.0800000000002" y1="547.52" x2="1159.72" y2="559.38" stroke="#2e8b2e" stroke-width="0.7" opacity="0.8"/>
<line x1="1130.0800000000002" y1="559.38" x2="1159.72" y2="547.52" stroke="#2e8b2e" stroke-width="0.7" opacity="0.8"/>
<circle cx="1125" cy="579.9" r="10" fill="#000"/>
<circle cx="1157.3" cy="579.9" r="10" fill="#000"/>
<text x="1295.7" y="466.6" font-size="17.36" fill="#000" textLength="20.0" lengthAdjust="spacingAndGlyphs">C1</text>
<rect x="1295.1" y="472.5" width="23.600000000000136" height="38.69999999999999" fill="none" stroke="#000" stroke-width="1.6"/>
<rect x="1299.5839999999998" y="477.531" width="14.63200000000029" height="11.610000000000014" fill="#000"/>
<rect x="1299.5839999999998" y="494.55899999999997" width="14.63200000000029" height="11.610000000000014" fill="#ff0000"/>
<line x1="1300.5839999999998" y1="477.531" x2="1313.2160000000001" y2="506.169" stroke="#2e8b2e" stroke-width="0.7" opacity="0.8"/>
<line x1="1300.5839999999998" y1="506.169" x2="1313.2160000000001" y2="477.531" stroke="#2e8b2e" stroke-width="0.7" opacity="0.8"/>
<rect x="1295.1" y="512.8" width="23.600000000000136" height="38.40000000000009" fill="none" stroke="#000" stroke-width="1.6"/>
<rect x="1299.5839999999998" y="517.7919999999999" width="14.63200000000029" height="11.520000000000095" fill="#000"/>
<rect x="1299.5839999999998" y="534.688" width="14.63200000000029" height="11.520000000000095" fill="#ff0000"/>
<line x1="1300.5839999999998" y1="517.7919999999999" x2="1313.2160000000001" y2="546.2080000000001" stroke="#2e8b2e" stroke-width="0.7" opacity="0.8"/>
<line x1="1300.5839999999998" y1="546.2080000000001" x2="1313.2160000000001" y2="517.7919999999999" stroke="#2e8b2e" stroke-width="0.7" opacity="0.8"/>
<rect x="1295.1" y="553.7" width="23.600000000000136" height="38.799999999999955" fill="none" stroke="#000" stroke-width="1.6"/>
<rect x="1299.5839999999998" y="558.744" width="14.63200000000029" height="11.639999999999986" fill="#000"/>
<rect x="1299.5839999999998" y="575.816" width="14.63200000000029" height="11.639999999999986" fill="#ff0000"/>
<line x1="1300.5839999999998" y1="558.744" x2="1313.2160000000001" y2="587.456" stroke="#2e8b2e" stroke-width="0.7" opacity="0.8"/>
<line x1="1300.5839999999998" y1="587.456" x2="1313.2160000000001" y2="558.744" stroke="#2e8b2e" stroke-width="0.7" opacity="0.8"/>
<text x="1320.7" y="579.7" font-size="22.4" fill="#000" textLength="27.5" lengthAdjust="spacingAndGlyphs">R2</text>
<circle cx="1240.6" cy="515.7" r="9.4" fill="#000"/>
<circle cx="1266.6" cy="515.7" r="9.4" fill="#ff0000"/>
<text x="1266.6" y="539.4" font-size="22.4" fill="#000" textLength="25.1" lengthAdjust="spacingAndGlyphs">R1</text>
<circle cx="1228.2" cy="547.8" r="9.6" fill="#000"/>
<circle cx="1253.4" cy="547.8" r="9.6" fill="#000"/>
<circle cx="1279.4" cy="547.8" r="9.6" fill="#000"/>
<circle cx="1247.3" cy="580.1" r="9.8" fill="#000"/>
<circle cx="1279.4" cy="580.1" r="9.8" fill="#000"/>
<text transform="translate(1283.3,604.3) rotate(-90)" font-size="23.52" fill="#000" textLength="56.3" lengthAdjust="spacingAndGlyphs">TP33</text>
<text x="1374" y="443.1" font-size="15.68" fill="#000" textLength="26.3" lengthAdjust="spacingAndGlyphs">C25</text>
<rect x="1373.8" y="447.5" width="26.5" height="53.89999999999998" fill="none" stroke="#000" stroke-width="1.6"/>
<rect x="1378.835" y="454.507" width="16.429999999999836" height="16.16999999999996" fill="#ff0000"/>
<rect x="1378.835" y="478.22299999999996" width="16.429999999999836" height="16.170000000000016" fill="#000"/>
<line x1="1379.835" y1="454.507" x2="1394.2649999999999" y2="494.393" stroke="#2e8b2e" stroke-width="0.7" opacity="0.8"/>
<line x1="1379.835" y1="494.393" x2="1394.2649999999999" y2="454.507" stroke="#2e8b2e" stroke-width="0.7" opacity="0.8"/>
<rect x="1406.6" y="443.1" width="33.40000000000009" height="66.69999999999999" fill="none" stroke="#000" stroke-width="1.6"/>
<rect x="1415" y="453.8" width="6" height="13.699999999999989" fill="#000"/>
<rect x="1415" y="486.2" width="6" height="13.800000000000011" fill="#000"/>
<text x="1411" y="431" font-size="23.52" fill="#000" textLength="19" lengthAdjust="spacingAndGlyphs">U</text>
<text x="1355.1" y="532.1" font-size="22.4" fill="#000" textLength="35.4" lengthAdjust="spacingAndGlyphs">R22</text>
<rect x="1392.5" y="513.8" width="47.5" height="23.0" fill="none" stroke="#000" stroke-width="1.6"/>
<rect x="1398.2" y="518.4" width="14.25" height="13.799999999999955" fill="#ff0000"/>
<rect x="1420.05" y="518.4" width="14.25" height="13.799999999999955" fill="#000"/>
<line x1="1398.2" y1="519.4" x2="1434.3" y2="531.1999999999999" stroke="#2e8b2e" stroke-width="0.7" opacity="0.8"/>
<line x1="1398.2" y1="531.1999999999999" x2="1434.3" y2="519.4" stroke="#2e8b2e" stroke-width="0.7" opacity="0.8"/>
<circle cx="1421" cy="581.3" r="9.5" fill="#ff0000"/>
<circle cx="1421" cy="614" r="10" fill="#000"/>
<rect x="1242.6" y="605.6" width="63.700000000000045" height="32.19999999999993" fill="none" stroke="#000" stroke-width="1.6"/>
<rect x="1249.3" y="606.8" width="50.299999999999955" height="30.200000000000045" fill="#ff0000"/>
<line x1="1251.3" y1="608.8" x2="1297.6" y2="635" stroke="#6a5a10" stroke-width="1.3"/>
<line x1="1251.3" y1="635" x2="1297.6" y2="608.8" stroke="#6a5a10" stroke-width="1.3"/>
<rect x="1312.2" y="609.6" width="39.0" height="23.600000000000023" fill="none" stroke="#000" stroke-width="1.6"/>
<rect x="1316.88" y="614.32" width="11.700000000000045" height="14.159999999999968" fill="#000"/>
<rect x="1334.82" y="614.32" width="11.700000000000045" height="14.159999999999968" fill="#ff0000"/>
<line x1="1316.88" y1="615.32" x2="1346.52" y2="627.48" stroke="#2e8b2e" stroke-width="0.7" opacity="0.8"/>
<line x1="1316.88" y1="627.48" x2="1346.52" y2="615.32" stroke="#2e8b2e" stroke-width="0.7" opacity="0.8"/>
<text x="1353.1" y="627.9" font-size="21.84" fill="#000" textLength="35.0" lengthAdjust="spacingAndGlyphs">C37</text>
<text x="1215" y="630.8" font-size="14.56" fill="#000" textLength="22.4" lengthAdjust="spacingAndGlyphs">R27</text>
<rect x="1214.7" y="634.9" width="23.0" height="39.30000000000007" fill="none" stroke="#000" stroke-width="1.6"/>
<rect x="1219.07" y="640.009" width="14.260000000000218" height="11.789999999999964" fill="#ff0000"/>
<rect x="1219.07" y="657.301" width="14.260000000000218" height="11.789999999999964" fill="#000"/>
<line x1="1220.07" y1="640.009" x2="1232.3300000000002" y2="669.091" stroke="#2e8b2e" stroke-width="0.7" opacity="0.8"/>
<line x1="1220.07" y1="669.091" x2="1232.3300000000002" y2="640.009" stroke="#2e8b2e" stroke-width="0.7" opacity="0.8"/>
<circle cx="1192.4" cy="670.3" r="9" fill="#000"/>
<rect x="1281" y="636.5" width="35.299999999999955" height="66.89999999999998" fill="none" stroke="#000" stroke-width="1.6"/>
<circle cx="1298.6" cy="653.6" r="10" fill="#000"/>
<rect x="1288.2" y="675.6" width="20.700000000000045" height="20.899999999999977" fill="#ff0000"/>
<text x="1243.6" y="677.2" font-size="23.52" fill="#000" textLength="36.4" lengthAdjust="spacingAndGlyphs">J15</text>
<circle cx="1264.6" cy="670.3" r="12.5" fill="#000"/>
<text x="1320.9" y="659.9" font-size="22.4" fill="#000" textLength="38.1" lengthAdjust="spacingAndGlyphs">C42</text>
<rect x="1320.3" y="666.4" width="39.299999999999955" height="22.600000000000023" fill="none" stroke="#000" stroke-width="1.6"/>
<rect x="1325.0159999999998" y="670.92" width="11.790000000000191" height="13.56000000000006" fill="#000"/>
<rect x="1343.0939999999998" y="670.92" width="11.790000000000191" height="13.56000000000006" fill="#ff0000"/>
<line x1="1325.0159999999998" y1="671.92" x2="1354.884" y2="683.48" stroke="#2e8b2e" stroke-width="0.7" opacity="0.8"/>
<line x1="1325.0159999999998" y1="683.48" x2="1354.884" y2="671.92" stroke="#2e8b2e" stroke-width="0.7" opacity="0.8"/>
<text x="1384.6" y="659.9" font-size="22.4" fill="#000" textLength="38.4" lengthAdjust="spacingAndGlyphs">C48</text>
<rect x="1384.2" y="666.4" width="55.799999999999955" height="22.600000000000023" fill="none" stroke="#000" stroke-width="1.6"/>
<rect x="1390.896" y="670.92" width="16.74000000000001" height="13.56000000000006" fill="#ff0000"/>
<rect x="1416.564" y="670.92" width="16.74000000000001" height="13.56000000000006" fill="#000"/>
<line x1="1390.896" y1="671.92" x2="1433.304" y2="683.48" stroke="#2e8b2e" stroke-width="0.7" opacity="0.8"/>
<line x1="1390.896" y1="683.48" x2="1433.304" y2="671.92" stroke="#2e8b2e" stroke-width="0.7" opacity="0.8"/>
<text x="1191.5" y="702.8" font-size="22.96" fill="#000" textLength="53.5" lengthAdjust="spacingAndGlyphs">TP28</text>
<rect x="1185.6" y="709.6" width="64.90000000000009" height="32.89999999999998" fill="none" stroke="#000" stroke-width="1.6"/>
<rect x="1193" y="710.6" width="50.59999999999991" height="31.100000000000023" fill="#ff0000"/>
<line x1="1195" y1="712.6" x2="1241.6" y2="739.7" stroke="#6a5a10" stroke-width="1.3"/>
<line x1="1195" y1="739.7" x2="1241.6" y2="712.6" stroke="#6a5a10" stroke-width="1.3"/>
<text x="1284.9" y="730.3" font-size="23.52" fill="#000" textLength="39.9" lengthAdjust="spacingAndGlyphs">U19</text>
<rect x="1326.2" y="695.3" width="27.5" height="54.700000000000045" fill="none" stroke="#000" stroke-width="1.6"/>
<rect x="1328.7" y="697.8" width="4.0" height="10.5" fill="#000"/>
<rect x="1328.7" y="737.2" width="4.0" height="10.399999999999977" fill="#000"/>
<rect x="1334.7" y="697.8" width="4.0" height="10.5" fill="#000"/>
<rect x="1334.7" y="737.2" width="4.0" height="10.399999999999977" fill="#000"/>
<rect x="1340.7" y="697.8" width="4.0" height="10.5" fill="#000"/>
<rect x="1340.7" y="737.2" width="4.0" height="10.399999999999977" fill="#000"/>
<rect x="1346.7" y="697.8" width="4.0" height="10.5" fill="#ff0000"/>
<rect x="1346.7" y="737.2" width="4.0" height="10.399999999999977" fill="#000"/>
<line x1="1330.2" y1="699" x2="1350.2" y2="747" stroke="#2e8b2e" stroke-width="0.9"/>
<line x1="1350.2" y1="699" x2="1330.2" y2="747" stroke="#2e8b2e" stroke-width="0.9"/>
<rect x="1390.5" y="695.3" width="27.5" height="54.700000000000045" fill="none" stroke="#000" stroke-width="1.6"/>
<rect x="1393.0" y="697.8" width="4.0" height="10.5" fill="#000"/>
<rect x="1393.0" y="737.2" width="4.0" height="10.399999999999977" fill="#ff0000"/>
<rect x="1399.0" y="697.8" width="4.0" height="10.5" fill="#000"/>
<rect x="1399.0" y="737.2" width="4.0" height="10.399999999999977" fill="#000"/>
<rect x="1405.0" y="697.8" width="4.0" height="10.5" fill="#000"/>
<rect x="1405.0" y="737.2" width="4.0" height="10.399999999999977" fill="#000"/>
<rect x="1411.0" y="697.8" width="4.0" height="10.5" fill="#000"/>
<rect x="1411.0" y="737.2" width="4.0" height="10.399999999999977" fill="#000"/>
<line x1="1394.5" y1="699" x2="1414.5" y2="747" stroke="#2e8b2e" stroke-width="0.9"/>
<line x1="1414.5" y1="699" x2="1394.5" y2="747" stroke="#2e8b2e" stroke-width="0.9"/>
<text transform="translate(1385.2,742.1) rotate(-90)" font-size="23.52" fill="#000" textLength="39.3" lengthAdjust="spacingAndGlyphs">U20</text>
<text x="1247.5" y="756.8" font-size="14.56" fill="#000" textLength="22.2" lengthAdjust="spacingAndGlyphs">R35</text>
<rect x="1246.9" y="761.8" width="23.199999999999818" height="39.30000000000007" fill="none" stroke="#000" stroke-width="1.6"/>
<rect x="1251.308" y="766.909" width="14.384000000000015" height="11.789999999999964" fill="#000"/>
<rect x="1251.308" y="784.201" width="14.384000000000015" height="11.789999999999964" fill="#ff0000"/>
<line x1="1252.308" y1="766.909" x2="1264.692" y2="795.991" stroke="#2e8b2e" stroke-width="0.7" opacity="0.8"/>
<line x1="1252.308" y1="795.991" x2="1264.692" y2="766.909" stroke="#2e8b2e" stroke-width="0.7" opacity="0.8"/>
<text x="1176.7" y="780.4" font-size="23.52" fill="#000" textLength="39.3" lengthAdjust="spacingAndGlyphs">U25</text>
<rect x="1218" y="756.8" width="24.59999999999991" height="34.90000000000009" fill="none" stroke="#000" stroke-width="2.2"/>
<rect x="1218" y="756.8" width="7" height="9.200000000000045" fill="#000"/>
<rect x="1228" y="756.8" width="6" height="9.200000000000045" fill="#000"/>
<rect x="1235.5" y="756.8" width="7.099999999999909" height="9.200000000000045" fill="#ff0000"/>
<rect x="1218" y="782" width="7" height="9.700000000000045" fill="#000"/>
<rect x="1235.5" y="782" width="7.099999999999909" height="9.700000000000045" fill="#000"/>
<line x1="1222" y1="758" x2="1240" y2="790" stroke="#2e8b2e" stroke-width="0.7" opacity="0.8"/>
<line x1="1222" y1="790" x2="1240" y2="758" stroke="#2e8b2e" stroke-width="0.7" opacity="0.8"/>
<text x="1281" y="772.6" font-size="22.4" fill="#000" textLength="35.3" lengthAdjust="spacingAndGlyphs">C45</text>
<rect x="1318.3" y="754.9" width="38.90000000000009" height="22.600000000000023" fill="none" stroke="#000" stroke-width="1.6"/>
<rect x="1322.968" y="759.42" width="11.669999999999845" height="13.56000000000006" fill="#000"/>
<rect x="1340.862" y="759.42" width="11.669999999999845" height="13.56000000000006" fill="#ff0000"/>
<line x1="1322.968" y1="760.42" x2="1352.532" y2="771.98" stroke="#2e8b2e" stroke-width="0.7" opacity="0.8"/>
<line x1="1322.968" y1="771.98" x2="1352.532" y2="760.42" stroke="#2e8b2e" stroke-width="0.7" opacity="0.8"/>
<rect x="1384.2" y="754.9" width="55.799999999999955" height="22.600000000000023" fill="none" stroke="#000" stroke-width="1.6"/>
<rect x="1390.896" y="759.42" width="16.74000000000001" height="13.56000000000006" fill="#ff0000"/>
<rect x="1416.564" y="759.42" width="16.74000000000001" height="13.56000000000006" fill="#000"/>
<line x1="1390.896" y1="760.42" x2="1433.304" y2="771.98" stroke="#2e8b2e" stroke-width="0.7" opacity="0.8"/>
<line x1="1390.896" y1="771.98" x2="1433.304" y2="760.42" stroke="#2e8b2e" stroke-width="0.7" opacity="0.8"/>
<text x="1384.6" y="798.1" font-size="22.4" fill="#000" textLength="38.4" lengthAdjust="spacingAndGlyphs">C49</text>
<rect x="1210.1" y="798.2" width="32.40000000000009" height="64.59999999999991" fill="none" stroke="#000" stroke-width="1.6"/>
<rect x="1211" y="805.7" width="31" height="50.09999999999991" fill="#ff0000"/>
<line x1="1213" y1="807.7" x2="1240" y2="853.8" stroke="#6a5a10" stroke-width="1.3"/>
<line x1="1213" y1="853.8" x2="1240" y2="807.7" stroke="#6a5a10" stroke-width="1.3"/>
<text x="1211" y="835.4" font-size="14.0" fill="#000" textLength="31" lengthAdjust="spacingAndGlyphs">TP24</text>
<rect x="1215.4" y="867.3" width="39.799999999999955" height="22.40000000000009" fill="none" stroke="#000" stroke-width="1.6"/>
<rect x="1220.1760000000002" y="871.78" width="11.939999999999827" height="13.440000000000055" fill="#ff0000"/>
<rect x="1238.4840000000002" y="871.78" width="11.939999999999827" height="13.440000000000055" fill="#000"/>
<line x1="1220.1760000000002" y1="872.78" x2="1250.424" y2="884.22" stroke="#2e8b2e" stroke-width="0.7" opacity="0.8"/>
<line x1="1220.1760000000002" y1="884.22" x2="1250.424" y2="872.78" stroke="#2e8b2e" stroke-width="0.7" opacity="0.8"/>
<rect x="1215.4" y="890.6" width="39.799999999999955" height="23.899999999999977" fill="none" stroke="#000" stroke-width="1.6"/>
<rect x="1220.1760000000002" y="895.38" width="11.939999999999827" height="14.340000000000032" fill="#ff0000"/>
<rect x="1238.4840000000002" y="895.38" width="11.939999999999827" height="14.340000000000032" fill="#000"/>
<line x1="1220.1760000000002" y1="896.38" x2="1250.424" y2="908.72" stroke="#2e8b2e" stroke-width="0.7" opacity="0.8"/>
<line x1="1220.1760000000002" y1="908.72" x2="1250.424" y2="896.38" stroke="#2e8b2e" stroke-width="0.7" opacity="0.8"/>
<text x="1216.3" y="934.9" font-size="22.4" fill="#000" textLength="36.3" lengthAdjust="spacingAndGlyphs">R21</text>
<path d="M1260,958 L1260,836 L1420,836" fill="none" stroke="#000" stroke-width="1.6"/>
<circle cx="1290.1" cy="859.6" r="15.9" fill="#000"/>
<text x="1135.1" y="836.5" font-size="17.92" fill="#000" textLength="22.1" lengthAdjust="spacingAndGlyphs">D2</text>
<rect x="1134.6" y="842.1" width="22.90000000000009" height="39.5" fill="none" stroke="#000" stroke-width="1.6"/>
<rect x="1138.951" y="847.235" width="14.197999999999865" height="11.850000000000023" fill="#000"/>
<rect x="1138.951" y="864.615" width="14.197999999999865" height="11.850000000000023" fill="#ff0000"/>
<line x1="1139.951" y1="847.235" x2="1152.149" y2="876.465" stroke="#2e8b2e" stroke-width="0.7" opacity="0.8"/>
<line x1="1139.951" y1="876.465" x2="1152.149" y2="847.235" stroke="#2e8b2e" stroke-width="0.7" opacity="0.8"/>
<text x="1168" y="844.3" font-size="22.4" fill="#000" textLength="38" lengthAdjust="spacingAndGlyphs">C36</text>
<rect x="1167.2" y="851.5" width="39.799999999999955" height="22.899999999999977" fill="none" stroke="#000" stroke-width="1.6"/>
<rect x="1171.976" y="856.08" width="11.939999999999827" height="13.739999999999895" fill="#ff0000"/>
<rect x="1190.284" y="856.08" width="11.939999999999827" height="13.739999999999895" fill="#000"/>
<line x1="1171.976" y1="857.08" x2="1202.224" y2="868.8199999999999" stroke="#2e8b2e" stroke-width="0.7" opacity="0.8"/>
<line x1="1171.976" y1="868.8199999999999" x2="1202.224" y2="857.08" stroke="#2e8b2e" stroke-width="0.7" opacity="0.8"/>
<text x="1121.3" y="912" font-size="23.52" fill="#000" textLength="40.1" lengthAdjust="spacingAndGlyphs">U14</text>
<rect x="1163.5" y="879.8" width="50.0" height="49.80000000000007" fill="none" stroke="#000" stroke-width="1.6"/>
<rect x="1176.6" y="880.2" width="4.6" height="12.6" fill="#000" rx="2.3"/>
<rect x="1176.6" y="916.4" width="4.6" height="12.6" fill="#000" rx="2.3"/>
<rect x="1164" y="892.85" width="13" height="4.3" fill="#000" rx="2.15"/>
<rect x="1200.2" y="892.85" width="13" height="4.3" fill="#000" rx="2.15"/>
<rect x="1183.1999999999998" y="880.2" width="4.6" height="12.6" fill="#000" rx="2.3"/>
<rect x="1183.1999999999998" y="916.4" width="4.6" height="12.6" fill="#000" rx="2.3"/>
<rect x="1164" y="899.25" width="13" height="4.3" fill="#000" rx="2.15"/>
<rect x="1200.2" y="899.25" width="13" height="4.3" fill="#000" rx="2.15"/>
<rect x="1189.8" y="880.2" width="4.6" height="12.6" fill="#000" rx="2.3"/>
<rect x="1189.8" y="916.4" width="4.6" height="12.6" fill="#000" rx="2.3"/>
<rect x="1164" y="905.65" width="13" height="4.3" fill="#000" rx="2.15"/>
<rect x="1200.2" y="905.65" width="13" height="4.3" fill="#000" rx="2.15"/>
<rect x="1196.3999999999999" y="880.2" width="4.6" height="12.6" fill="#ff0000" rx="2.3"/>
<rect x="1196.3999999999999" y="916.4" width="4.6" height="12.6" fill="#000" rx="2.3"/>
<rect x="1164" y="912.0500000000001" width="13" height="4.3" fill="#000" rx="2.15"/>
<rect x="1200.2" y="912.0500000000001" width="13" height="4.3" fill="#000" rx="2.15"/>
<circle cx="1188.4" cy="904.3" r="7.6" fill="#000"/>
<text x="1125.4" y="958" font-size="23.52" fill="#000" textLength="40.2" lengthAdjust="spacingAndGlyphs">R14</text>
<rect x="1167.3" y="931.8" width="22.700000000000045" height="43.200000000000045" fill="none" stroke="#000" stroke-width="1.6"/>
<rect x="1172.3" y="935.8" width="12.700000000000045" height="11.900000000000091" fill="#000"/>
<rect x="1172.3" y="954.3" width="12.700000000000045" height="7.7000000000000455" fill="#ff0000"/>
<line x1="1172.3" y1="935.8" x2="1185" y2="958" stroke="#2e8b2e" stroke-width="0.7" opacity="0.8"/>
<line x1="1172.3" y1="958" x2="1185" y2="935.8" stroke="#2e8b2e" stroke-width="0.7" opacity="0.8"/>
<rect x="1190" y="931.8" width="24.799999999999955" height="43.200000000000045" fill="none" stroke="#000" stroke-width="1.6"/>
<rect x="1195" y="935.8" width="14.799999999999955" height="11.900000000000091" fill="#000"/>
<rect x="1195" y="954.3" width="14.799999999999955" height="7.7000000000000455" fill="#ff0000"/>
<line x1="1195" y1="935.8" x2="1209.8" y2="958" stroke="#2e8b2e" stroke-width="0.7" opacity="0.8"/>
<line x1="1195" y1="958" x2="1209.8" y2="935.8" stroke="#2e8b2e" stroke-width="0.7" opacity="0.8"/>
<text x="1031" y="873.2" font-size="25.2" fill="#000" textLength="25.6" lengthAdjust="spacingAndGlyphs">D1</text>
<rect x="984.7" y="879.8" width="119.79999999999995" height="95.20000000000005" fill="none" stroke="#000" stroke-width="1.6"/>
<circle cx="1073.3" cy="902" r="13.4" fill="#000"/>
<rect x="1026.8" y="911.2" width="11.400000000000091" height="22.5" fill="#000"/>
<rect x="1040.5" y="911.2" width="8.099999999999909" height="22.5" fill="#000"/>
<rect x="1051" y="911.2" width="11.299999999999955" height="22.5" fill="#ff0000"/>
<rect x="1026.8" y="950" width="11.400000000000091" height="25" fill="#000"/>
<rect x="1040.5" y="950" width="8.099999999999909" height="25" fill="#000"/>
<rect x="1051" y="950" width="11.299999999999955" height="25" fill="#000"/>
<line x1="1032" y1="913" x2="1058" y2="957" stroke="#3a9a3a" stroke-width="2" opacity="0.6"/>
<line x1="1060" y1="913" x2="1034" y2="957" stroke="#3a9a3a" stroke-width="2" opacity="0.6"/>
<text x="711.9" y="666.2" font-size="16.8" fill="#000" textLength="32.4" lengthAdjust="spacingAndGlyphs">TP27</text>
<rect x="711.2" y="669.5" width="33.5" height="64.89999999999998" fill="none" stroke="#000" stroke-width="1.6"/>
<rect x="712.9" y="676.9" width="30.100000000000023" height="50.10000000000002" fill="#ff0000"/>
<line x1="714.9" y1="678.9" x2="741" y2="725" stroke="#6a5a10" stroke-width="1.3"/>
<line x1="714.9" y1="725" x2="741" y2="678.9" stroke="#6a5a10" stroke-width="1.3"/>
<text x="792.2" y="673.5" font-size="16.8" fill="#000" textLength="32.4" lengthAdjust="spacingAndGlyphs">TP23</text>
<rect x="792.2" y="677.5" width="32.799999999999955" height="64.89999999999998" fill="none" stroke="#000" stroke-width="1.6"/>
<rect x="793" y="685.2" width="31" height="50.19999999999993" fill="#ff0000"/>
<line x1="795" y1="687.2" x2="822" y2="733.4" stroke="#6a5a10" stroke-width="1.3"/>
<line x1="795" y1="733.4" x2="822" y2="687.2" stroke="#6a5a10" stroke-width="1.3"/>
<rect x="736" y="733.7" width="32.799999999999955" height="65.29999999999995" fill="none" stroke="#000" stroke-width="1.6"/>
<rect x="737" y="741" width="31" height="50.200000000000045" fill="#ff0000"/>
<line x1="739" y1="743" x2="766" y2="789.2" stroke="#6a5a10" stroke-width="1.3"/>
<line x1="739" y1="789.2" x2="766" y2="743" stroke="#6a5a10" stroke-width="1.3"/>
<text x="680.8" y="773.8" font-size="25.76" fill="#000" textLength="53.8" lengthAdjust="spacingAndGlyphs">TP25</text>
<text x="789.8" y="767.2" font-size="15.68" fill="#000" textLength="23.4" lengthAdjust="spacingAndGlyphs">R34</text>
<rect x="789.4" y="770.5" width="23.600000000000023" height="39.5" fill="none" stroke="#000" stroke-width="1.6"/>
<rect x="794.3" y="775.2" width="14.200000000000045" height="12.399999999999977" fill="#ff0000"/>
<rect x="794.3" y="793.5" width="14.200000000000045" height="11.799999999999955" fill="#000"/>
<line x1="795" y1="776" x2="807.5" y2="805" stroke="#2e8b2e" stroke-width="0.7" opacity="0.8"/>
<line x1="795" y1="805" x2="807.5" y2="776" stroke="#2e8b2e" stroke-width="0.7" opacity="0.8"/>
<text x="820.6" y="765.5" font-size="15.68" fill="#000" textLength="24.1" lengthAdjust="spacingAndGlyphs">U24</text>
<rect x="820.6" y="769" width="24.799999999999955" height="34.799999999999955" fill="none" stroke="#000" stroke-width="2"/>
<rect x="820.3" y="768.7" width="7.5" height="11.0" fill="#000"/>
<rect x="837.8" y="768.7" width="7.900000000000091" height="11.0" fill="#000"/>
<rect x="820.3" y="792.7" width="7.5" height="11.299999999999955" fill="#ff0000"/>
<rect x="829.2" y="792.7" width="6.7999999999999545" height="11.299999999999955" fill="#000"/>
<rect x="838" y="792.7" width="7.7000000000000455" height="11.299999999999955" fill="#000"/>
<line x1="826" y1="770" x2="844" y2="797" stroke="#2e8b2e" stroke-width="0.7" opacity="0.8"/>
<line x1="826" y1="797" x2="844" y2="770" stroke="#2e8b2e" stroke-width="0.7" opacity="0.8"/>
</g>
</svg></body></html>
